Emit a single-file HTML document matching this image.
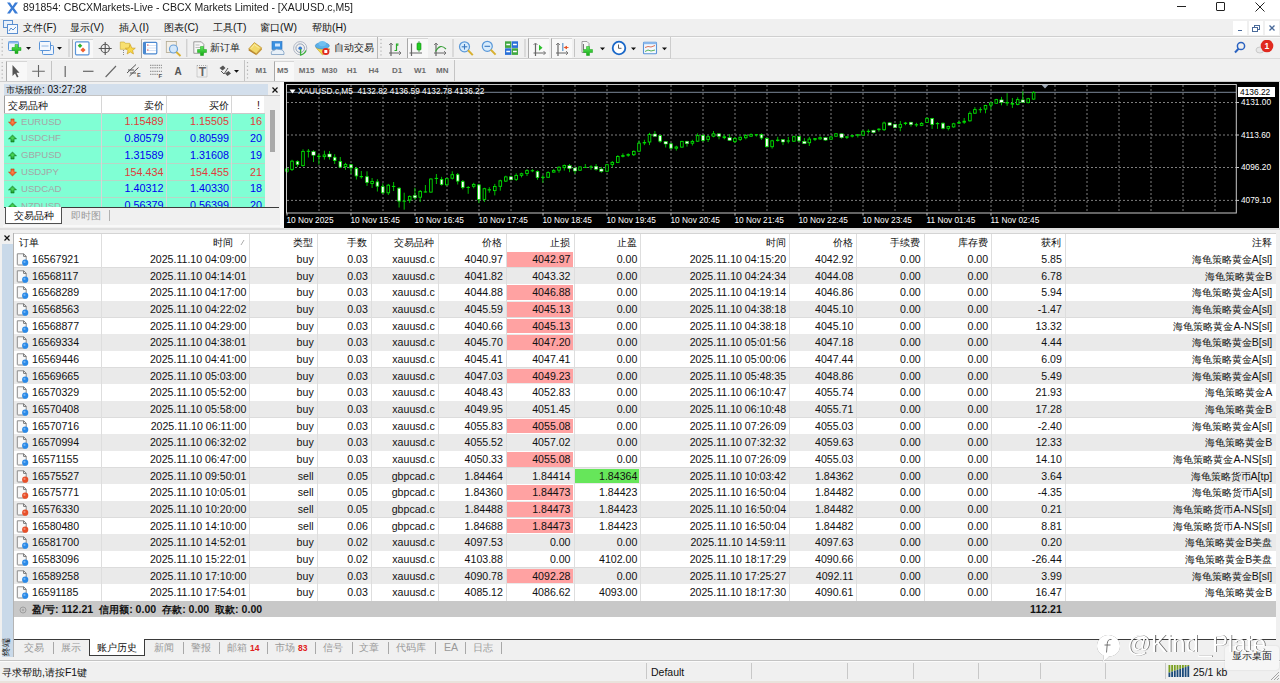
<!DOCTYPE html><html><head><meta charset="utf-8"><style>
*{box-sizing:border-box}
html,body{margin:0;padding:0}
body{width:1280px;height:683px;overflow:hidden;position:relative;background:#f0f0f0;font-family:"Liberation Sans",sans-serif;color:#000}
.a{position:absolute}
.t{position:absolute;white-space:nowrap;line-height:1}
.r{text-align:right}
</style></head><body><div class="a" style="left:0;top:0;width:1280px;height:18.5px;background:#fff"></div><svg class="a" style="left:6px;top:2px" width="13" height="12" viewBox="0 0 13 12"><path d="M1 0.5 L4 0.5 L6.5 4.2 L9 0.5 L12 0.5 L8 6 L12 11.5 L9 11.5 L6.5 7.8 L4 11.5 L1 11.5 L5 6 Z" fill="#3a7cd6"/></svg><div class="t" style="left:23px;top:0.6px;font-size:11.6px;color:#1a1a1a;transform:scaleX(0.905);transform-origin:0 0">891854: CBCXMarkets-Live - CBCX Markets Limited - [XAUUSD.c,M5]</div><div class="a" style="left:1177px;top:6px;width:9px;height:1px;background:#222"></div><div class="a" style="left:1216px;top:2px;width:9px;height:9px;border:1px solid #222;border-radius:1px"></div><svg class="a" style="left:1255px;top:2px" width="10" height="10" viewBox="0 0 10 10"><path d="M0.5 0.5 L9.5 9.5 M9.5 0.5 L0.5 9.5" stroke="#222" stroke-width="1"/></svg><div class="a" style="left:0;top:18.5px;width:1280px;height:17px;background:#f0f0f0"></div><div class="a" style="left:0;top:35.5px;width:1280px;height:1px;background:#d9d9d9"></div><svg class="a" style="left:3px;top:20px" width="15" height="14" viewBox="0 0 15 14"><rect x="0.5" y="0.5" width="9" height="7" fill="#e8f0fa" stroke="#5b8fd0"/><rect x="4.5" y="4.5" width="10" height="9" fill="#f4f8fd" stroke="#5b8fd0"/><path d="M6 11 L8 8 L10 10 L13 7" stroke="#5b8fd0" fill="none"/></svg><div class="t" style="left:23px;top:21.5px;font-size:10.5px;color:#111"><span style="font-size:0.94em">文件</span>(F)</div><div class="t" style="left:70px;top:21.5px;font-size:10.5px;color:#111"><span style="font-size:0.94em">显示</span>(V)</div><div class="t" style="left:119px;top:21.5px;font-size:10.5px;color:#111"><span style="font-size:0.94em">插入</span>(I)</div><div class="t" style="left:164px;top:21.5px;font-size:10.5px;color:#111"><span style="font-size:0.94em">图表</span>(C)</div><div class="t" style="left:213px;top:21.5px;font-size:10.5px;color:#111"><span style="font-size:0.94em">工具</span>(T)</div><div class="t" style="left:260px;top:21.5px;font-size:10.5px;color:#111"><span style="font-size:0.94em">窗口</span>(W)</div><div class="t" style="left:312px;top:21.5px;font-size:10.5px;color:#111"><span style="font-size:0.94em">帮助</span>(H)</div><div class="a" style="left:1233px;top:21px;width:13.5px;height:14px;background:#fff"></div><div class="a" style="left:1249px;top:21px;width:13.5px;height:14px;background:#fff"></div><div class="a" style="left:1265px;top:21px;width:13.5px;height:14px;background:#fff"></div><div class="a" style="left:1238px;top:29.5px;width:4px;height:1.5px;background:#4a6a9a"></div><svg class="a" style="left:1252px;top:25px" width="8" height="7" viewBox="0 0 8 7"><rect x="2.5" y="0.5" width="5" height="4" fill="none" stroke="#4a6a9a"/><rect x="0.5" y="2.5" width="5" height="4" fill="#fff" stroke="#4a6a9a"/></svg><svg class="a" style="left:1269px;top:25px" width="6" height="6" viewBox="0 0 6 6"><path d="M0.5 0.5 L5.5 5.5 M5.5 0.5 L0.5 5.5" stroke="#4a6a9a" stroke-width="1.3"/></svg><div class="a" style="left:0;top:58px;width:1280px;height:1px;background:#dadada"></div><div class="a" style="left:0;top:80.5px;width:1280px;height:1.5px;background:#dadada"></div><div class="a" style="left:0;top:36px;width:1280px;height:1px;background:#cfcfcf"></div><div class="a" style="left:0;top:37px;width:1280px;height:1px;background:#fafafa"></div><div class="a" style="left:0;top:58.2px;width:671px;height:1px;background:#cdcdcd"></div><div class="a" style="left:0;top:59.2px;width:671px;height:1px;background:#fafafa"></div><div class="a" style="left:670.3px;top:37px;width:1px;height:21.5px;background:#cdcdcd"></div><div class="a" style="left:0;top:80.8px;width:1280px;height:1px;background:#cdcdcd"></div><div class="a" style="left:377px;top:37px;width:1px;height:21.5px;background:#b8b8b8"></div><div class="a" style="left:72.3px;top:38.5px;width:21.200000000000003px;height:19.5px;background:#f8f8f8;border-left:1px solid #a8a8a8;border-top:1.3px solid #d6d6d6"></div><div class="a" style="left:140.5px;top:38.5px;width:20.5px;height:19.5px;background:#f8f8f8;border-left:1px solid #a8a8a8;border-top:1.3px solid #d6d6d6"></div><div class="a" style="left:406.5px;top:38.3px;width:21.5px;height:19.700000000000003px;background:#f8f8f8;border-left:1px solid #a8a8a8;border-top:1.3px solid #d6d6d6"></div><div class="a" style="left:528px;top:38.3px;width:21px;height:19.700000000000003px;background:#f8f8f8;border-left:1px solid #a8a8a8;border-top:1.3px solid #d6d6d6"></div><div class="a" style="left:551px;top:38.3px;width:21px;height:19.700000000000003px;background:#f8f8f8;border-left:1px solid #a8a8a8;border-top:1.3px solid #d6d6d6"></div><div class="a" style="left:5.5px;top:60.5px;width:21.0px;height:20.299999999999997px;background:#f8f8f8;border-left:1px solid #a8a8a8;border-top:1.3px solid #d6d6d6"></div><div class="a" style="left:273.5px;top:60.5px;width:20.5px;height:20.299999999999997px;background:#f8f8f8;border-left:1px solid #a8a8a8;border-top:1.3px solid #d6d6d6"></div><svg class="a" style="left:0;top:0" width="700" height="84" viewBox="0 0 700 84"><defs><linearGradient id="gp" x1="0" y1="0" x2="0" y2="1"><stop offset="0" stop-color="#5ee85e"/><stop offset="1" stop-color="#12a812"/></linearGradient></defs><line x1="2.2" y1="39" x2="2.2" y2="57" stroke="#b4b4b4" stroke-width="1.2" stroke-dasharray="1.3 2.5"/><line x1="2.2" y1="62" x2="2.2" y2="79" stroke="#b4b4b4" stroke-width="1.2" stroke-dasharray="1.3 2.5"/><line x1="381" y1="39" x2="381" y2="57" stroke="#b4b4b4" stroke-width="1.2" stroke-dasharray="1.3 2.5"/><line x1="247.5" y1="62" x2="247.5" y2="79" stroke="#b4b4b4" stroke-width="1.2" stroke-dasharray="1.3 2.5"/><line x1="69" y1="39" x2="69" y2="57" stroke="#c4c4c4" stroke-width="1"/><line x1="186.8" y1="39" x2="186.8" y2="57" stroke="#c4c4c4" stroke-width="1"/><line x1="453" y1="39" x2="453" y2="57" stroke="#c4c4c4" stroke-width="1"/><line x1="525" y1="39" x2="525" y2="57" stroke="#c4c4c4" stroke-width="1"/><line x1="574.5" y1="39" x2="574.5" y2="57" stroke="#c4c4c4" stroke-width="1"/><line x1="51.5" y1="61" x2="51.5" y2="80" stroke="#c4c4c4" stroke-width="1"/><line x1="244.5" y1="60" x2="244.5" y2="81" stroke="#c4c4c4" stroke-width="1"/><line x1="454.5" y1="60" x2="454.5" y2="81" stroke="#c4c4c4" stroke-width="1"/><path d="M26 47 L31 47 L28.5 49.8 Z" fill="#111"/><path d="M57 47 L62 47 L59.5 49.8 Z" fill="#111"/><path d="M234 70 L239 70 L236.5 72.8 Z" fill="#111"/><path d="M600 47.5 L605 47.5 L602.5 50.3 Z" fill="#111"/><path d="M631 47.5 L636 47.5 L633.5 50.3 Z" fill="#111"/><path d="M662 47.5 L667 47.5 L664.5 50.3 Z" fill="#111"/><rect x="8.5" y="41.5" width="10" height="9" rx="1" fill="#eef4fc" stroke="#5a94d8" stroke-width="1"/><rect x="8.5" y="41.5" width="10" height="2" fill="#8ab8ec"/><path d="M15 44.5 h3 v3 h3 v3 h-3 v3 h-3 v-3 h-3 v-3 h3 z" fill="url(#gp)" stroke="#18a018" stroke-width="0.5"/><rect x="42.5" y="45.5" width="11" height="9" rx="1" fill="#eef4fc" stroke="#5a94d8"/><rect x="39.5" y="41.5" width="11" height="9" rx="1" fill="#f4f8fd" stroke="#5a94d8"/><line x1="41.5" y1="46" x2="48.5" y2="46" stroke="#7aa6dc" stroke-width="0.8"/><rect x="75.5" y="41.8" width="13.5" height="13" rx="1" fill="#fff" stroke="#5a94d8" stroke-width="1.2"/><path d="M80 43.5 L82.3 45.8 L80 48 L77.7 45.8Z" fill="#2cb02c"/><path d="M83 47.5 L85.6 50 L83 52.5 L80.4 50Z" fill="#f06030"/><circle cx="105.2" cy="48.5" r="4.2" fill="none" stroke="#555" stroke-width="1.1"/><path d="M105.2 42 V55 M98.7 48.5 H111.7" stroke="#555" stroke-width="1.1"/><path d="M120.3 42 h4 l1 1.3 h4.5 v6 h-9.5 z" fill="#f8e070" stroke="#c8a830" stroke-width="0.6"/><path d="M130.3 44.5 L131.8 48 L135.3 48.2 L132.6 50.5 L133.5 54 L130.3 52 L127.1 54 L128 50.5 L125.3 48.2 L128.8 48 Z" fill="#f8d848" stroke="#c89820" stroke-width="0.6"/><line x1="123.5" y1="50" x2="123.5" y2="55" stroke="#444" stroke-width="0.6" stroke-dasharray="1 1"/><rect x="143.5" y="42.3" width="13.3" height="11.5" rx="1" fill="#fff" stroke="#4a88d0" stroke-width="1.2"/><rect x="143.5" y="42.3" width="2.5" height="11.5" fill="#4a88d0"/><path d="M147 45.5 H156 M147 48 H156 M147 50.5 H156" stroke="#b8d0f0" stroke-width="0.6"/><rect x="147" y="44.5" width="1.5" height="1" fill="#e05050"/><rect x="147" y="49.5" width="1.5" height="1" fill="#e05050"/><rect x="166.3" y="41.5" width="10" height="11" fill="#f4f0e8" stroke="#b0a890" stroke-width="0.8"/><circle cx="173.5" cy="49" r="4" fill="#d4e8fa" stroke="#6aa0d8" stroke-width="1.2"/><path d="M176.3 52 L180.5 56" stroke="#d8b030" stroke-width="1.8"/><path d="M193.8 41.8 h7.5 l2.5 2.5 v9 h-10 z" fill="#f6f6f6" stroke="#888" stroke-width="0.8"/><path d="M195.5 45 h4 M195.5 47.5 h6" stroke="#999" stroke-width="0.6"/><path d="M200.5 46.5 h3 v3 h3 v3 h-3 v3 h-3 v-3 h-3 v-3 h3 z" fill="url(#gp)" stroke="#18a018" stroke-width="0.5"/><path d="M248.8 48.8 L254.3 42.6 L261.6 47.8 L256.2 53.8 Z" fill="#f2d868" stroke="#b88a28" stroke-width="0.7"/><path d="M248.8 48.8 L256.2 53.8 L256.4 55.2 L248.6 50.4 Z" fill="#b88428"/><path d="M256.2 53.8 L261.6 47.8 L262 49.4 L256.4 55.2 Z" fill="#c89838"/><path d="M251 48.5 L254.5 44.6 L258.6 47.6" fill="none" stroke="#fff4b8" stroke-width="0.8"/><rect x="272" y="41.5" width="10" height="8" fill="#3a90e0" stroke="#2a70c0" stroke-width="0.6"/><rect x="275" y="43.5" width="5" height="3" fill="#cfe6ff"/><path d="M271.5 54.5 Q270.5 50.5 274 50.5 Q276 48 279.5 49.5 Q284.5 49.5 284 54.5 Z" fill="#e8f0f8" stroke="#7a9cc0" stroke-width="0.8"/><circle cx="300.2" cy="48.2" r="6.6" fill="none" stroke="#a8b0c0" stroke-width="0.9"/><circle cx="300.2" cy="48.2" r="4.3" fill="none" stroke="#8898b0" stroke-width="0.9"/><circle cx="300.2" cy="48.2" r="1.8" fill="#3a7ad0"/><path d="M300.6 49 V55 Q304 54.5 306 50.5" fill="none" stroke="#3ab03a" stroke-width="1.3"/><path d="M315.8 47.5 L322.5 55 L330 49 Z" fill="#f0d850" stroke="#c0a030" stroke-width="0.6"/><ellipse cx="322.3" cy="45.8" rx="7" ry="3.2" fill="#5ab0e8" stroke="#3a88c8" stroke-width="0.6"/><ellipse cx="322.3" cy="43.6" rx="3.8" ry="2.6" fill="#70c0f0"/><circle cx="325.8" cy="51.5" r="3.6" fill="#e02a20"/><rect x="324.3" y="50" width="3" height="3" fill="#fff"/><path d="M391 43.5 V56 M389 53 H401" stroke="#666" stroke-width="1.2"/><path d="M389 45 L391 43 L393 45 M399 51 L401 53 L399 55" fill="none" stroke="#666" stroke-width="0.8"/><path d="M436 43.5 V56 M434 53 H446" stroke="#666" stroke-width="1.2"/><path d="M434 45 L436 43 L438 45 M444 51 L446 53 L444 55" fill="none" stroke="#666" stroke-width="0.8"/><path d="M535.5 43.5 V56 M533.5 53 H545.5" stroke="#666" stroke-width="1.2"/><path d="M533.5 45 L535.5 43 L537.5 45 M543.5 51 L545.5 53 L543.5 55" fill="none" stroke="#666" stroke-width="0.8"/><path d="M558 43.5 V56 M556 53 H568" stroke="#666" stroke-width="1.2"/><path d="M556 45 L558 43 L560 45 M566 51 L568 53 L566 55" fill="none" stroke="#666" stroke-width="0.8"/><path d="M394.5 50.5 H396.5 V44 H398.5" fill="none" stroke="#2aaa2a" stroke-width="1.2"/><path d="M396.5 44 L399 45 L396.5 46.2Z" fill="#2aaa2a"/><path d="M411.5 43.5 V56 M409.5 53 H422" stroke="#666" stroke-width="1.2"/><line x1="419" y1="41" x2="419" y2="52" stroke="#3a9a3a" stroke-width="0.8"/><rect x="417" y="43" width="4" height="7" rx="0.8" fill="#22cc22" stroke="#118811" stroke-width="0.6"/><path d="M435.5 51.5 Q440 43 446 49" fill="none" stroke="#3aa03a" stroke-width="1.1"/><circle cx="464.5" cy="46.8" r="5" fill="#d8ecfc" stroke="#5a98d8" stroke-width="1.2"/><path d="M468.0 50.3 L472.8 55.099999999999994" stroke="#d8b030" stroke-width="2"/><path d="M461.7 46.8 H467.3" stroke="#3a78c0" stroke-width="1.1"/><path d="M464.5 44.0 V49.599999999999994" stroke="#3a78c0" stroke-width="1.1"/><circle cx="487.3" cy="46.3" r="5" fill="#d8ecfc" stroke="#5a98d8" stroke-width="1.2"/><path d="M490.8 49.8 L495.6 54.599999999999994" stroke="#d8b030" stroke-width="2"/><path d="M484.5 46.3 H490.1" stroke="#3a78c0" stroke-width="1.1"/><rect x="505" y="41.3" width="6.3" height="6.6" fill="#40a840"/><rect x="511.7" y="41.3" width="6.3" height="6.6" fill="#2a70d8"/><rect x="505" y="48.3" width="6.3" height="6.6" fill="#2a70d8"/><rect x="511.7" y="48.3" width="6.3" height="6.6" fill="#40a840"/><path d="M506.3 44.5 h3.8 M513 44.5 h3.8 M506.3 51.5 h3.8 M513 51.5 h3.8" stroke="#fff" stroke-width="1.6"/><path d="M539 44.8 L542.5 47.8 L539 50.8 Z" fill="#2ac02a"/><rect x="562" y="43" width="1.5" height="8" fill="#7aa8d0"/><path d="M563.5 47.5 L567 45.8 V49.2 Z" fill="#e85020"/><path d="M566 47.5 h2.5" stroke="#e85020" stroke-width="0.9"/><path d="M582 41.5 h5 l2 2 v9 h-7 z" fill="#f6f6f6" stroke="#888" stroke-width="0.8"/><path d="M583.5 44 v6" stroke="#555" stroke-width="0.8"/><path d="M586.5 46.5 h3 v3 h3 v3 h-3 v3 h-3 v-3 h-3 v-3 h3 z" fill="url(#gp)" stroke="#18a018" stroke-width="0.5"/><circle cx="619" cy="48" r="6.3" fill="#fff" stroke="#1a68c8" stroke-width="1.8"/><path d="M618.5 44.5 V48.3 H621.5" fill="none" stroke="#333" stroke-width="0.8"/><rect x="643.5" y="42.2" width="13" height="11.5" rx="0.8" fill="#f4f8fd" stroke="#5a94d8" stroke-width="1.1"/><rect x="643.5" y="42.2" width="13" height="2" fill="#8ab8ec"/><path d="M645 47.5 L648 46.5 L651 47 L655 45.5" fill="none" stroke="#d05030" stroke-width="0.8"/><path d="M645 51.5 L648 50 L651 51 L655 50" fill="none" stroke="#30a030" stroke-width="0.8"/><path d="M12.5 65 L12.5 76 L15 73.5 L17 77.5 L18.5 76.8 L16.5 72.8 L19.5 72.8 Z" fill="#555"/><path d="M38.5 65 V77 M32.2 71.2 H44.8" stroke="#666" stroke-width="1.1"/><path d="M65.2 66 V77" stroke="#666" stroke-width="1.2"/><path d="M83 71.3 H93.5" stroke="#666" stroke-width="1.2"/><path d="M105.6 77 L116 66" stroke="#666" stroke-width="1.1"/><path d="M127 73 L136 64.5 M129.5 76 L138.5 67.5 M128 70 h6 M130 73 h6" stroke="#555" stroke-width="1"/><path d="M150 65.3 h12 M150 67.8 h12 M150 71.3 h12 M150 74.3 h8" stroke="#777" stroke-width="0.9" stroke-dasharray="1.4 0.8"/><path d="M197 65.5 h10 v11.5 h-10 z" fill="none" stroke="#999" stroke-width="0.8" stroke-dasharray="1 1"/><path d="M219.5 68 L223 65.5 L225.5 68 L222.5 70.5 Z M225 73.5 L228.5 71 L231 73.5 L227.5 76 Z" fill="#555"/><path d="M221 71 L224 74 L228 68" fill="none" stroke="#555" stroke-width="1"/></svg><div class="t" style="left:137px;top:72.5px;font-size:5.5px;font-weight:bold;color:#555">E</div><div class="t" style="left:158.5px;top:73px;font-size:6px;font-weight:bold;color:#555">F</div><div class="t" style="left:174.5px;top:66.5px;font-size:10px;font-weight:bold;color:#555">A</div><div class="t" style="left:198.8px;top:66px;font-size:12px;font-weight:bold;color:#666">T</div><div class="t" style="left:210px;top:41.6px;font-size:10.5px;color:#222"><span style="font-size:0.95em">新订单</span></div><div class="t" style="left:334px;top:41.6px;font-size:10.5px;color:#222"><span style="font-size:0.95em">自动交易</span></div><div class="t" style="left:255.5px;top:67.2px;font-size:8px;font-weight:bold;color:#6c6c6c">M1</div><div class="t" style="left:277px;top:67.2px;font-size:8px;font-weight:bold;color:#6c6c6c">M5</div><div class="t" style="left:298.8px;top:67.2px;font-size:8px;font-weight:bold;color:#6c6c6c">M15</div><div class="t" style="left:321.8px;top:67.2px;font-size:8px;font-weight:bold;color:#6c6c6c">M30</div><div class="t" style="left:346.8px;top:67.2px;font-size:8px;font-weight:bold;color:#6c6c6c">H1</div><div class="t" style="left:368.5px;top:67.2px;font-size:8px;font-weight:bold;color:#6c6c6c">H4</div><div class="t" style="left:392px;top:67.2px;font-size:8px;font-weight:bold;color:#6c6c6c">D1</div><div class="t" style="left:414px;top:67.2px;font-size:8px;font-weight:bold;color:#6c6c6c">W1</div><div class="t" style="left:436px;top:67.2px;font-size:8px;font-weight:bold;color:#6c6c6c">MN</div><svg class="a" style="left:1230px;top:40px" width="50" height="16" viewBox="0 0 50 16"><circle cx="11" cy="6" r="3.6" fill="none" stroke="#2a62c0" stroke-width="1.5"/><path d="M8.5 8.8 L5 12.5" stroke="#2a62c0" stroke-width="2"/><ellipse cx="30" cy="10" rx="4" ry="3" fill="#e8e8e8" stroke="#bbb" stroke-width="0.7"/><circle cx="37" cy="6" r="6.3" fill="#e02a20"/></svg><div class="t" style="left:1264.6px;top:41.8px;font-size:8.6px;font-weight:bold;color:#fff">1</div><div class="a" style="left:3.5px;top:84px;width:264px;height:11px;background:#d3dfec"></div><div class="t" style="left:6px;top:84.5px;font-size:10px;color:#111"><span style="font-size:0.94em">市场报价</span>: 03:27:28</div><svg class="a" style="left:272px;top:86.5px" width="6" height="6" viewBox="0 0 6 6"><path d="M0.5 0.5 L5.5 5.5 M5.5 0.5 L0.5 5.5" stroke="#111" stroke-width="1.2"/></svg><div class="a" style="left:3.5px;top:95px;width:276.5px;height:1px;background:#c4c4c4"></div><div class="a" style="left:4px;top:96px;width:260px;height:17.3px;background:#fff"></div><div class="a" style="left:3.5px;top:96px;width:0.8px;height:111px;background:#a0a0a0"></div><div class="a" style="left:4px;top:113.3px;width:261.3px;height:94px;background:#80ffd4;overflow:hidden"><svg class="a" style="left:3.6px;top:4.30px" width="9" height="9" viewBox="0 0 10 10"><defs><radialGradient id="ag0" cx="0.5" cy="0.45" r="0.6"><stop offset="0" stop-color="#ff8a50"/><stop offset="1" stop-color="#e04010"/></radialGradient></defs><path d="M3.2 1 L6.8 1 L6.8 4.5 L9.5 4.5 L5 9 L0.5 4.5 L3.2 4.5 Z" fill="url(#ag0)" stroke="#c03010" stroke-width="0.5"/></svg><div class="t" style="left:17px;top:3.30px;font-size:9.6px;color:#a6a6a6">EURUSD</div><div class="t r" style="right:101.80px;top:3.00px;font-size:10.8px;color:#e03c3c">1.15489</div><div class="t r" style="right:36.30px;top:3.00px;font-size:10.8px;color:#e03c3c">1.15505</div><div class="t r" style="right:3.30px;top:3.00px;font-size:10.8px;color:#e03c3c">16</div><div class="a" style="left:0;top:16.30px;width:100%;height:1px;background:#b9d6c6"></div><svg class="a" style="left:3.6px;top:21.10px" width="9" height="9" viewBox="0 0 10 10"><defs><radialGradient id="ag1" cx="0.5" cy="0.45" r="0.6"><stop offset="0" stop-color="#50e060"/><stop offset="1" stop-color="#108820"/></radialGradient></defs><path d="M5 1 L9.5 5.5 L6.8 5.5 L6.8 9 L3.2 9 L3.2 5.5 L0.5 5.5 Z" fill="url(#ag1)" stroke="#0a6a1a" stroke-width="0.5"/></svg><div class="t" style="left:17px;top:20.10px;font-size:9.6px;color:#a6a6a6">USDCHF</div><div class="t r" style="right:101.80px;top:19.80px;font-size:10.8px;color:#0000f0">0.80579</div><div class="t r" style="right:36.30px;top:19.80px;font-size:10.8px;color:#0000f0">0.80599</div><div class="t r" style="right:3.30px;top:19.80px;font-size:10.8px;color:#0000f0">20</div><div class="a" style="left:0;top:33.10px;width:100%;height:1px;background:#b9d6c6"></div><svg class="a" style="left:3.6px;top:37.90px" width="9" height="9" viewBox="0 0 10 10"><defs><radialGradient id="ag2" cx="0.5" cy="0.45" r="0.6"><stop offset="0" stop-color="#50e060"/><stop offset="1" stop-color="#108820"/></radialGradient></defs><path d="M5 1 L9.5 5.5 L6.8 5.5 L6.8 9 L3.2 9 L3.2 5.5 L0.5 5.5 Z" fill="url(#ag2)" stroke="#0a6a1a" stroke-width="0.5"/></svg><div class="t" style="left:17px;top:36.90px;font-size:9.6px;color:#a6a6a6">GBPUSD</div><div class="t r" style="right:101.80px;top:36.60px;font-size:10.8px;color:#0000f0">1.31589</div><div class="t r" style="right:36.30px;top:36.60px;font-size:10.8px;color:#0000f0">1.31608</div><div class="t r" style="right:3.30px;top:36.60px;font-size:10.8px;color:#0000f0">19</div><div class="a" style="left:0;top:49.90px;width:100%;height:1px;background:#b9d6c6"></div><svg class="a" style="left:3.6px;top:54.70px" width="9" height="9" viewBox="0 0 10 10"><defs><radialGradient id="ag3" cx="0.5" cy="0.45" r="0.6"><stop offset="0" stop-color="#ff8a50"/><stop offset="1" stop-color="#e04010"/></radialGradient></defs><path d="M3.2 1 L6.8 1 L6.8 4.5 L9.5 4.5 L5 9 L0.5 4.5 L3.2 4.5 Z" fill="url(#ag3)" stroke="#c03010" stroke-width="0.5"/></svg><div class="t" style="left:17px;top:53.70px;font-size:9.6px;color:#a6a6a6">USDJPY</div><div class="t r" style="right:101.80px;top:53.40px;font-size:10.8px;color:#e03c3c">154.434</div><div class="t r" style="right:36.30px;top:53.40px;font-size:10.8px;color:#e03c3c">154.455</div><div class="t r" style="right:3.30px;top:53.40px;font-size:10.8px;color:#e03c3c">21</div><div class="a" style="left:0;top:66.70px;width:100%;height:1px;background:#b9d6c6"></div><svg class="a" style="left:3.6px;top:71.50px" width="9" height="9" viewBox="0 0 10 10"><defs><radialGradient id="ag4" cx="0.5" cy="0.45" r="0.6"><stop offset="0" stop-color="#50e060"/><stop offset="1" stop-color="#108820"/></radialGradient></defs><path d="M5 1 L9.5 5.5 L6.8 5.5 L6.8 9 L3.2 9 L3.2 5.5 L0.5 5.5 Z" fill="url(#ag4)" stroke="#0a6a1a" stroke-width="0.5"/></svg><div class="t" style="left:17px;top:70.50px;font-size:9.6px;color:#a6a6a6">USDCAD</div><div class="t r" style="right:101.80px;top:70.20px;font-size:10.8px;color:#0000f0">1.40312</div><div class="t r" style="right:36.30px;top:70.20px;font-size:10.8px;color:#0000f0">1.40330</div><div class="t r" style="right:3.30px;top:70.20px;font-size:10.8px;color:#0000f0">18</div><div class="a" style="left:0;top:83.50px;width:100%;height:1px;background:#b9d6c6"></div><svg class="a" style="left:3.6px;top:88.30px" width="9" height="9" viewBox="0 0 10 10"><defs><radialGradient id="ag5" cx="0.5" cy="0.45" r="0.6"><stop offset="0" stop-color="#50e060"/><stop offset="1" stop-color="#108820"/></radialGradient></defs><path d="M5 1 L9.5 5.5 L6.8 5.5 L6.8 9 L3.2 9 L3.2 5.5 L0.5 5.5 Z" fill="url(#ag5)" stroke="#0a6a1a" stroke-width="0.5"/></svg><div class="t" style="left:17px;top:87.30px;font-size:9.6px;color:#a6a6a6">NZDUSD</div><div class="t r" style="right:101.80px;top:87.00px;font-size:10.8px;color:#0000f0">0.56379</div><div class="t r" style="right:36.30px;top:87.00px;font-size:10.8px;color:#0000f0">0.56399</div><div class="t r" style="right:3.30px;top:87.00px;font-size:10.8px;color:#0000f0">20</div></div><div class="a" style="left:4px;top:112.8px;width:261.3px;height:1px;background:#c9c9c9"></div><div class="a" style="left:100.75px;top:96px;width:1px;height:111px;background:#d6d6d6"></div><div class="a" style="left:166.0px;top:96px;width:1px;height:111px;background:#d6d6d6"></div><div class="a" style="left:231.4px;top:96px;width:1px;height:111px;background:#d6d6d6"></div><div class="t" style="left:8px;top:99.5px;font-size:10.5px;color:#111"><span style="font-size:0.94em">交易品种</span></div><div class="t r" style="right:1116.5px;top:99.5px;font-size:10.5px;color:#111"><span style="font-size:0.94em">卖价</span></div><div class="t r" style="right:1051px;top:99.5px;font-size:10.5px;color:#111"><span style="font-size:0.94em">买价</span></div><div class="t r" style="right:1020px;top:99.5px;font-size:10.5px;color:#3a0a0a">!</div><div class="a" style="left:270.3px;top:109.5px;width:4.8px;height:42.3px;background:#a8a8a8"></div><div class="a" style="left:3.5px;top:207px;width:275.5px;height:1px;background:#3c3c3c"></div><div class="a" style="left:5px;top:207px;width:56.5px;height:16.8px;background:#fff;border:1px solid #505050;border-top:none"></div><div class="t" style="left:14px;top:209.8px;font-size:10.5px;color:#111"><span style="font-size:0.94em">交易品种</span></div><div class="t" style="left:71px;top:209.8px;font-size:10.5px;color:#999"><span style="font-size:0.94em">即时图</span></div><div class="a" style="left:108.5px;top:210px;width:1px;height:11px;background:#b0b0b0"></div><div class="a" style="left:0;top:227.6px;width:1280px;height:2px;background:#dedede"></div><div class="a" style="left:280.4px;top:82px;width:3.2px;height:145.5px;background:#fafafa"></div><div class="a" style="left:3px;top:224.8px;width:277.5px;height:2.6px;background:#f8f8f8"></div><div class="a" style="left:284.4px;top:82.3px;width:994.6px;height:146.2px;background:#000"></div><svg class="a" style="left:0;top:0" width="1280" height="683" viewBox="0 0 1280 683"><line x1="319.0" y1="85" x2="319.0" y2="213" stroke="#8c8c8c" stroke-width="0.9" stroke-dasharray="2 2"/><line x1="351.0" y1="85" x2="351.0" y2="213" stroke="#8c8c8c" stroke-width="0.9" stroke-dasharray="2 2"/><line x1="383.0" y1="85" x2="383.0" y2="213" stroke="#8c8c8c" stroke-width="0.9" stroke-dasharray="2 2"/><line x1="415.0" y1="85" x2="415.0" y2="213" stroke="#8c8c8c" stroke-width="0.9" stroke-dasharray="2 2"/><line x1="447.0" y1="85" x2="447.0" y2="213" stroke="#8c8c8c" stroke-width="0.9" stroke-dasharray="2 2"/><line x1="479.0" y1="85" x2="479.0" y2="213" stroke="#8c8c8c" stroke-width="0.9" stroke-dasharray="2 2"/><line x1="511.0" y1="85" x2="511.0" y2="213" stroke="#8c8c8c" stroke-width="0.9" stroke-dasharray="2 2"/><line x1="543.0" y1="85" x2="543.0" y2="213" stroke="#8c8c8c" stroke-width="0.9" stroke-dasharray="2 2"/><line x1="575.0" y1="85" x2="575.0" y2="213" stroke="#8c8c8c" stroke-width="0.9" stroke-dasharray="2 2"/><line x1="607.0" y1="85" x2="607.0" y2="213" stroke="#8c8c8c" stroke-width="0.9" stroke-dasharray="2 2"/><line x1="639.0" y1="85" x2="639.0" y2="213" stroke="#8c8c8c" stroke-width="0.9" stroke-dasharray="2 2"/><line x1="671.0" y1="85" x2="671.0" y2="213" stroke="#8c8c8c" stroke-width="0.9" stroke-dasharray="2 2"/><line x1="703.0" y1="85" x2="703.0" y2="213" stroke="#8c8c8c" stroke-width="0.9" stroke-dasharray="2 2"/><line x1="735.0" y1="85" x2="735.0" y2="213" stroke="#8c8c8c" stroke-width="0.9" stroke-dasharray="2 2"/><line x1="767.0" y1="85" x2="767.0" y2="213" stroke="#8c8c8c" stroke-width="0.9" stroke-dasharray="2 2"/><line x1="799.0" y1="85" x2="799.0" y2="213" stroke="#8c8c8c" stroke-width="0.9" stroke-dasharray="2 2"/><line x1="831.0" y1="85" x2="831.0" y2="213" stroke="#8c8c8c" stroke-width="0.9" stroke-dasharray="2 2"/><line x1="863.0" y1="85" x2="863.0" y2="213" stroke="#8c8c8c" stroke-width="0.9" stroke-dasharray="2 2"/><line x1="895.0" y1="85" x2="895.0" y2="213" stroke="#8c8c8c" stroke-width="0.9" stroke-dasharray="2 2"/><line x1="927.0" y1="85" x2="927.0" y2="213" stroke="#8c8c8c" stroke-width="0.9" stroke-dasharray="2 2"/><line x1="959.0" y1="85" x2="959.0" y2="213" stroke="#8c8c8c" stroke-width="0.9" stroke-dasharray="2 2"/><line x1="991.0" y1="85" x2="991.0" y2="213" stroke="#8c8c8c" stroke-width="0.9" stroke-dasharray="2 2"/><line x1="1023.0" y1="85" x2="1023.0" y2="213" stroke="#8c8c8c" stroke-width="0.9" stroke-dasharray="2 2"/><line x1="1055.0" y1="85" x2="1055.0" y2="213" stroke="#8c8c8c" stroke-width="0.9" stroke-dasharray="2 2"/><line x1="1087.0" y1="85" x2="1087.0" y2="213" stroke="#8c8c8c" stroke-width="0.9" stroke-dasharray="2 2"/><line x1="1119.0" y1="85" x2="1119.0" y2="213" stroke="#8c8c8c" stroke-width="0.9" stroke-dasharray="2 2"/><line x1="1151.0" y1="85" x2="1151.0" y2="213" stroke="#8c8c8c" stroke-width="0.9" stroke-dasharray="2 2"/><line x1="1183.0" y1="85" x2="1183.0" y2="213" stroke="#8c8c8c" stroke-width="0.9" stroke-dasharray="2 2"/><line x1="1215.0" y1="85" x2="1215.0" y2="213" stroke="#8c8c8c" stroke-width="0.9" stroke-dasharray="2 2"/><line x1="287" y1="102.5" x2="1236" y2="102.5" stroke="#8c8c8c" stroke-width="0.9" stroke-dasharray="2 2"/><line x1="287" y1="135.0" x2="1236" y2="135.0" stroke="#8c8c8c" stroke-width="0.9" stroke-dasharray="2 2"/><line x1="287" y1="167.5" x2="1236" y2="167.5" stroke="#8c8c8c" stroke-width="0.9" stroke-dasharray="2 2"/><line x1="287" y1="200.4" x2="1236" y2="200.4" stroke="#8c8c8c" stroke-width="0.9" stroke-dasharray="2 2"/><line x1="287" y1="92.3" x2="1236.3" y2="92.3" stroke="#7b8898" stroke-width="1"/><line x1="286.9" y1="167.5" x2="286.9" y2="173.0" stroke="#00d000" stroke-width="0.9"/><rect x="285.60" y="169.00" width="2.5999999999999996" height="2.20" fill="#000" stroke="#00e000" stroke-width="0.9"/><line x1="292.0" y1="159.8" x2="292.0" y2="171.0" stroke="#00d000" stroke-width="0.9"/><rect x="290.70" y="161.20" width="2.5999999999999996" height="8.20" fill="#000" stroke="#00e000" stroke-width="0.9"/><line x1="297.5" y1="160.4" x2="297.5" y2="166.9" stroke="#00d000" stroke-width="0.9"/><rect x="296.20" y="161.40" width="2.5999999999999996" height="3.20" fill="#fff" stroke="#00e000" stroke-width="0.8"/><line x1="303.0" y1="149.3" x2="303.0" y2="166.6" stroke="#00d000" stroke-width="0.9"/><rect x="301.70" y="151.40" width="2.5999999999999996" height="14.20" fill="#000" stroke="#00e000" stroke-width="0.9"/><line x1="308.4" y1="149.0" x2="308.4" y2="157.5" stroke="#00d000" stroke-width="0.9"/><rect x="306.70" y="150.70" width="3.4" height="1.20" fill="#00d800"/><line x1="313.5" y1="150.2" x2="313.5" y2="162.0" stroke="#00d000" stroke-width="0.9"/><rect x="311.80" y="151.60" width="3.4" height="3.60" fill="#fff" stroke="#00d800" stroke-width="0.55"/><line x1="318.9" y1="154.0" x2="318.9" y2="164.5" stroke="#00d000" stroke-width="0.9"/><rect x="317.20" y="155.70" width="3.4" height="1.30" fill="#00d800"/><line x1="324.4" y1="150.7" x2="324.4" y2="159.6" stroke="#00d000" stroke-width="0.9"/><rect x="323.10" y="155.00" width="2.5999999999999996" height="1.60" fill="#000" stroke="#00e000" stroke-width="0.9"/><line x1="329.5" y1="151.0" x2="329.5" y2="159.6" stroke="#00d000" stroke-width="0.9"/><rect x="327.80" y="154.00" width="3.4" height="3.00" fill="#fff" stroke="#00d800" stroke-width="0.55"/><line x1="334.7" y1="154.2" x2="334.7" y2="164.0" stroke="#00d000" stroke-width="0.9"/><rect x="333.40" y="157.30" width="2.5999999999999996" height="3.30" fill="#fff" stroke="#00e000" stroke-width="0.8"/><line x1="340.3" y1="157.0" x2="340.3" y2="167.8" stroke="#00d000" stroke-width="0.9"/><rect x="339.00" y="161.40" width="2.5999999999999996" height="5.70" fill="#fff" stroke="#00e000" stroke-width="0.8"/><line x1="345.5" y1="162.8" x2="345.5" y2="169.8" stroke="#00d000" stroke-width="0.9"/><rect x="344.20" y="164.40" width="2.5999999999999996" height="2.10" fill="#000" stroke="#00e000" stroke-width="0.9"/><line x1="351.0" y1="164.0" x2="351.0" y2="174.0" stroke="#00d000" stroke-width="0.9"/><rect x="349.70" y="164.70" width="2.5999999999999996" height="3.20" fill="#fff" stroke="#00e000" stroke-width="0.8"/><line x1="356.4" y1="166.9" x2="356.4" y2="179.5" stroke="#00d000" stroke-width="0.9"/><rect x="355.10" y="168.40" width="2.5999999999999996" height="7.50" fill="#fff" stroke="#00e000" stroke-width="0.8"/><line x1="361.3" y1="171.0" x2="361.3" y2="178.6" stroke="#00d000" stroke-width="0.9"/><rect x="359.60" y="176.00" width="3.4" height="1.20" fill="#00d800"/><line x1="367.0" y1="171.3" x2="367.0" y2="185.9" stroke="#00d000" stroke-width="0.9"/><rect x="365.70" y="176.70" width="2.5999999999999996" height="5.90" fill="#fff" stroke="#00e000" stroke-width="0.8"/><line x1="372.1" y1="178.0" x2="372.1" y2="188.0" stroke="#00d000" stroke-width="0.9"/><rect x="370.80" y="181.40" width="2.5999999999999996" height="2.10" fill="#000" stroke="#00e000" stroke-width="0.9"/><line x1="377.4" y1="179.2" x2="377.4" y2="191.5" stroke="#00d000" stroke-width="0.9"/><rect x="376.10" y="181.90" width="2.5999999999999996" height="4.30" fill="#fff" stroke="#00e000" stroke-width="0.8"/><line x1="382.8" y1="183.3" x2="382.8" y2="193.8" stroke="#00d000" stroke-width="0.9"/><rect x="381.50" y="186.60" width="2.5999999999999996" height="6.20" fill="#fff" stroke="#00e000" stroke-width="0.8"/><line x1="388.3" y1="183.9" x2="388.3" y2="195.0" stroke="#00d000" stroke-width="0.9"/><rect x="387.00" y="185.20" width="2.5999999999999996" height="7.60" fill="#000" stroke="#00e000" stroke-width="0.9"/><line x1="393.6" y1="182.0" x2="393.6" y2="191.0" stroke="#00d000" stroke-width="0.9"/><rect x="391.90" y="185.90" width="3.4" height="1.10" fill="#00d800"/><line x1="399.1" y1="187.2" x2="399.1" y2="207.5" stroke="#00d000" stroke-width="0.9"/><rect x="397.80" y="188.20" width="2.5999999999999996" height="12.90" fill="#fff" stroke="#00e000" stroke-width="0.8"/><line x1="404.2" y1="192.7" x2="404.2" y2="209.7" stroke="#00d000" stroke-width="0.9"/><rect x="402.50" y="200.70" width="3.4" height="1.00" fill="#00d800"/><line x1="409.7" y1="195.4" x2="409.7" y2="203.0" stroke="#00d000" stroke-width="0.9"/><rect x="408.40" y="196.40" width="2.5999999999999996" height="3.60" fill="#000" stroke="#00e000" stroke-width="0.9"/><line x1="414.9" y1="187.8" x2="414.9" y2="199.8" stroke="#00d000" stroke-width="0.9"/><rect x="413.20" y="195.40" width="3.4" height="2.40" fill="#fff" stroke="#00d800" stroke-width="0.55"/><line x1="420.2" y1="190.0" x2="420.2" y2="202.0" stroke="#00d000" stroke-width="0.9"/><rect x="418.90" y="191.40" width="2.5999999999999996" height="5.80" fill="#000" stroke="#00e000" stroke-width="0.9"/><line x1="425.4" y1="185.0" x2="425.4" y2="192.5" stroke="#00d000" stroke-width="0.9"/><rect x="423.70" y="191.40" width="3.4" height="1.10" fill="#00d800"/><line x1="430.9" y1="178.4" x2="430.9" y2="192.7" stroke="#00d000" stroke-width="0.9"/><rect x="429.60" y="179.00" width="2.5999999999999996" height="13.10" fill="#000" stroke="#00e000" stroke-width="0.9"/><line x1="436.4" y1="174.0" x2="436.4" y2="184.0" stroke="#00d000" stroke-width="0.9"/><rect x="434.70" y="177.90" width="3.4" height="1.10" fill="#00d800"/><line x1="441.6" y1="176.8" x2="441.6" y2="185.6" stroke="#00d000" stroke-width="0.9"/><rect x="440.30" y="179.40" width="2.5999999999999996" height="5.20" fill="#fff" stroke="#00e000" stroke-width="0.8"/><line x1="446.8" y1="177.9" x2="446.8" y2="185.6" stroke="#00d000" stroke-width="0.9"/><rect x="445.50" y="178.60" width="2.5999999999999996" height="6.20" fill="#000" stroke="#00e000" stroke-width="0.9"/><line x1="452.3" y1="171.3" x2="452.3" y2="179.5" stroke="#00d000" stroke-width="0.9"/><rect x="451.00" y="174.70" width="2.5999999999999996" height="3.50" fill="#000" stroke="#00e000" stroke-width="0.9"/><line x1="457.7" y1="173.0" x2="457.7" y2="184.5" stroke="#00d000" stroke-width="0.9"/><rect x="456.40" y="174.70" width="2.5999999999999996" height="6.40" fill="#fff" stroke="#00e000" stroke-width="0.8"/><line x1="462.8" y1="180.0" x2="462.8" y2="189.4" stroke="#00d000" stroke-width="0.9"/><rect x="461.50" y="181.60" width="2.5999999999999996" height="5.80" fill="#fff" stroke="#00e000" stroke-width="0.8"/><line x1="468.2" y1="186.0" x2="468.2" y2="193.8" stroke="#00d000" stroke-width="0.9"/><rect x="466.50" y="187.00" width="3.4" height="1.00" fill="#00d800"/><line x1="473.7" y1="182.8" x2="473.7" y2="188.3" stroke="#00d000" stroke-width="0.9"/><rect x="472.40" y="184.40" width="2.5999999999999996" height="1.90" fill="#000" stroke="#00e000" stroke-width="0.9"/><line x1="478.9" y1="183.9" x2="478.9" y2="203.1" stroke="#00d000" stroke-width="0.9"/><rect x="477.60" y="184.90" width="2.5999999999999996" height="14.50" fill="#fff" stroke="#00e000" stroke-width="0.8"/><line x1="484.4" y1="187.8" x2="484.4" y2="202.0" stroke="#00d000" stroke-width="0.9"/><rect x="483.10" y="188.70" width="2.5999999999999996" height="10.70" fill="#000" stroke="#00e000" stroke-width="0.9"/><line x1="489.3" y1="187.2" x2="489.3" y2="192.7" stroke="#00d000" stroke-width="0.9"/><rect x="487.60" y="189.20" width="3.4" height="1.30" fill="#00d800"/><line x1="494.8" y1="183.9" x2="494.8" y2="195.4" stroke="#00d000" stroke-width="0.9"/><rect x="493.50" y="186.50" width="2.5999999999999996" height="4.10" fill="#000" stroke="#00e000" stroke-width="0.9"/><line x1="500.3" y1="179.7" x2="500.3" y2="190.7" stroke="#00d000" stroke-width="0.9"/><rect x="499.00" y="180.80" width="2.5999999999999996" height="5.50" fill="#000" stroke="#00e000" stroke-width="0.9"/><line x1="505.8" y1="175.7" x2="505.8" y2="182.0" stroke="#00d000" stroke-width="0.9"/><rect x="504.50" y="176.90" width="2.5999999999999996" height="4.20" fill="#000" stroke="#00e000" stroke-width="0.9"/><line x1="511.0" y1="175.7" x2="511.0" y2="180.4" stroke="#00d000" stroke-width="0.9"/><rect x="509.30" y="176.80" width="3.4" height="3.00" fill="#fff" stroke="#00d800" stroke-width="0.55"/><line x1="516.2" y1="173.3" x2="516.2" y2="181.0" stroke="#00d000" stroke-width="0.9"/><rect x="514.90" y="175.40" width="2.5999999999999996" height="4.00" fill="#000" stroke="#00e000" stroke-width="0.9"/><line x1="521.5" y1="172.7" x2="521.5" y2="177.4" stroke="#00d000" stroke-width="0.9"/><rect x="520.20" y="173.70" width="2.5999999999999996" height="1.60" fill="#000" stroke="#00e000" stroke-width="0.9"/><line x1="527.0" y1="169.2" x2="527.0" y2="176.0" stroke="#00d000" stroke-width="0.9"/><rect x="525.70" y="170.60" width="2.5999999999999996" height="2.90" fill="#000" stroke="#00e000" stroke-width="0.9"/><line x1="532.4" y1="169.2" x2="532.4" y2="172.2" stroke="#00d000" stroke-width="0.9"/><rect x="530.70" y="170.20" width="3.4" height="1.10" fill="#00d800"/><line x1="537.5" y1="170.4" x2="537.5" y2="179.8" stroke="#00d000" stroke-width="0.9"/><rect x="536.20" y="171.40" width="2.5999999999999996" height="6.20" fill="#fff" stroke="#00e000" stroke-width="0.8"/><line x1="542.9" y1="175.0" x2="542.9" y2="182.7" stroke="#00d000" stroke-width="0.9"/><rect x="541.20" y="176.80" width="3.4" height="1.20" fill="#00d800"/><line x1="548.1" y1="171.3" x2="548.1" y2="178.0" stroke="#00d000" stroke-width="0.9"/><rect x="546.80" y="172.60" width="2.5999999999999996" height="4.70" fill="#000" stroke="#00e000" stroke-width="0.9"/><line x1="553.7" y1="169.2" x2="553.7" y2="172.7" stroke="#00d000" stroke-width="0.9"/><rect x="552.40" y="170.60" width="2.5999999999999996" height="1.50" fill="#000" stroke="#00e000" stroke-width="0.9"/><line x1="559.0" y1="166.3" x2="559.0" y2="172.7" stroke="#00d000" stroke-width="0.9"/><rect x="557.70" y="167.30" width="2.5999999999999996" height="2.90" fill="#000" stroke="#00e000" stroke-width="0.9"/><line x1="564.3" y1="164.5" x2="564.3" y2="170.6" stroke="#00d000" stroke-width="0.9"/><rect x="563.00" y="165.50" width="2.5999999999999996" height="2.10" fill="#000" stroke="#00e000" stroke-width="0.9"/><line x1="569.5" y1="164.0" x2="569.5" y2="172.2" stroke="#00d000" stroke-width="0.9"/><rect x="567.80" y="165.70" width="3.4" height="2.90" fill="#fff" stroke="#00d800" stroke-width="0.55"/><line x1="575.0" y1="167.5" x2="575.0" y2="173.9" stroke="#00d000" stroke-width="0.9"/><rect x="573.30" y="168.00" width="3.4" height="3.00" fill="#fff" stroke="#00d800" stroke-width="0.55"/><line x1="580.0" y1="166.3" x2="580.0" y2="171.0" stroke="#00d000" stroke-width="0.9"/><rect x="578.70" y="167.00" width="2.5999999999999996" height="3.20" fill="#000" stroke="#00e000" stroke-width="0.9"/><line x1="585.3" y1="164.0" x2="585.3" y2="168.0" stroke="#00d000" stroke-width="0.9"/><rect x="583.60" y="166.90" width="3.4" height="1.00" fill="#00d800"/><line x1="591.0" y1="165.1" x2="591.0" y2="169.8" stroke="#00d000" stroke-width="0.9"/><rect x="589.30" y="166.30" width="3.4" height="1.20" fill="#00d800"/><line x1="596.1" y1="164.0" x2="596.1" y2="170.6" stroke="#00d000" stroke-width="0.9"/><rect x="594.40" y="166.30" width="3.4" height="2.90" fill="#fff" stroke="#00d800" stroke-width="0.55"/><line x1="601.4" y1="166.9" x2="601.4" y2="172.7" stroke="#00d000" stroke-width="0.9"/><rect x="599.70" y="169.00" width="3.4" height="2.40" fill="#fff" stroke="#00d800" stroke-width="0.55"/><line x1="607.0" y1="163.9" x2="607.0" y2="172.2" stroke="#00d000" stroke-width="0.9"/><rect x="605.70" y="164.70" width="2.5999999999999996" height="6.50" fill="#000" stroke="#00e000" stroke-width="0.9"/><line x1="612.3" y1="161.0" x2="612.3" y2="167.5" stroke="#00d000" stroke-width="0.9"/><rect x="611.00" y="162.40" width="2.5999999999999996" height="2.00" fill="#000" stroke="#00e000" stroke-width="0.9"/><line x1="617.8" y1="155.2" x2="617.8" y2="163.1" stroke="#00d000" stroke-width="0.9"/><rect x="616.50" y="156.50" width="2.5999999999999996" height="5.90" fill="#000" stroke="#00e000" stroke-width="0.9"/><line x1="622.9" y1="153.3" x2="622.9" y2="157.4" stroke="#00d000" stroke-width="0.9"/><rect x="621.20" y="155.10" width="3.4" height="1.70" fill="#00d800"/><line x1="628.2" y1="153.3" x2="628.2" y2="156.8" stroke="#00d000" stroke-width="0.9"/><rect x="626.50" y="154.10" width="3.4" height="1.60" fill="#00d800"/><line x1="633.8" y1="150.4" x2="633.8" y2="156.0" stroke="#00d000" stroke-width="0.9"/><rect x="632.50" y="151.40" width="2.5999999999999996" height="3.30" fill="#000" stroke="#00e000" stroke-width="0.9"/><line x1="639.0" y1="140.4" x2="639.0" y2="152.2" stroke="#00d000" stroke-width="0.9"/><rect x="637.70" y="143.20" width="2.5999999999999996" height="8.00" fill="#000" stroke="#00e000" stroke-width="0.9"/><line x1="644.4" y1="139.8" x2="644.4" y2="145.1" stroke="#00d000" stroke-width="0.9"/><rect x="642.70" y="142.00" width="3.4" height="1.40" fill="#00d800"/><line x1="649.5" y1="132.8" x2="649.5" y2="145.1" stroke="#00d000" stroke-width="0.9"/><rect x="648.20" y="134.40" width="2.5999999999999996" height="7.60" fill="#000" stroke="#00e000" stroke-width="0.9"/><line x1="654.9" y1="131.0" x2="654.9" y2="136.3" stroke="#00d000" stroke-width="0.9"/><rect x="653.20" y="134.00" width="3.4" height="2.40" fill="#fff" stroke="#00d800" stroke-width="0.55"/><line x1="660.1" y1="134.9" x2="660.1" y2="142.8" stroke="#00d000" stroke-width="0.9"/><rect x="658.80" y="135.60" width="2.5999999999999996" height="5.60" fill="#fff" stroke="#00e000" stroke-width="0.8"/><line x1="665.7" y1="141.0" x2="665.7" y2="147.5" stroke="#00d000" stroke-width="0.9"/><rect x="664.00" y="141.60" width="3.4" height="2.40" fill="#fff" stroke="#00d800" stroke-width="0.55"/><line x1="671.0" y1="142.8" x2="671.0" y2="149.2" stroke="#00d000" stroke-width="0.9"/><rect x="669.70" y="143.80" width="2.5999999999999996" height="4.40" fill="#fff" stroke="#00e000" stroke-width="0.8"/><line x1="676.3" y1="145.7" x2="676.3" y2="150.6" stroke="#00d000" stroke-width="0.9"/><rect x="675.00" y="147.00" width="2.5999999999999996" height="1.20" fill="#000" stroke="#00e000" stroke-width="0.9"/><line x1="681.9" y1="140.8" x2="681.9" y2="147.8" stroke="#00d000" stroke-width="0.9"/><rect x="680.60" y="141.40" width="2.5999999999999996" height="5.70" fill="#000" stroke="#00e000" stroke-width="0.9"/><line x1="687.0" y1="140.8" x2="687.0" y2="146.6" stroke="#00d000" stroke-width="0.9"/><rect x="685.30" y="141.30" width="3.4" height="2.40" fill="#fff" stroke="#00d800" stroke-width="0.55"/><line x1="692.4" y1="139.8" x2="692.4" y2="145.5" stroke="#00d000" stroke-width="0.9"/><rect x="691.10" y="141.40" width="2.5999999999999996" height="1.80" fill="#000" stroke="#00e000" stroke-width="0.9"/><line x1="697.6" y1="133.4" x2="697.6" y2="142.0" stroke="#00d000" stroke-width="0.9"/><rect x="696.30" y="135.60" width="2.5999999999999996" height="5.60" fill="#000" stroke="#00e000" stroke-width="0.9"/><line x1="703.0" y1="134.6" x2="703.0" y2="141.6" stroke="#00d000" stroke-width="0.9"/><rect x="701.70" y="135.30" width="2.5999999999999996" height="5.30" fill="#fff" stroke="#00e000" stroke-width="0.8"/><line x1="708.1" y1="135.2" x2="708.1" y2="142.0" stroke="#00d000" stroke-width="0.9"/><rect x="706.80" y="136.70" width="2.5999999999999996" height="2.70" fill="#000" stroke="#00e000" stroke-width="0.9"/><line x1="713.5" y1="131.0" x2="713.5" y2="137.3" stroke="#00d000" stroke-width="0.9"/><rect x="712.20" y="133.80" width="2.5999999999999996" height="2.40" fill="#000" stroke="#00e000" stroke-width="0.9"/><line x1="719.0" y1="133.4" x2="719.0" y2="139.3" stroke="#00d000" stroke-width="0.9"/><rect x="717.30" y="133.80" width="3.4" height="2.50" fill="#fff" stroke="#00d800" stroke-width="0.55"/><line x1="724.3" y1="134.6" x2="724.3" y2="139.3" stroke="#00d000" stroke-width="0.9"/><rect x="722.60" y="136.30" width="3.4" height="1.80" fill="#00d800"/><line x1="729.6" y1="134.0" x2="729.6" y2="141.0" stroke="#00d000" stroke-width="0.9"/><rect x="727.90" y="137.70" width="3.4" height="2.70" fill="#fff" stroke="#00d800" stroke-width="0.55"/><line x1="734.9" y1="136.9" x2="734.9" y2="143.1" stroke="#00d000" stroke-width="0.9"/><rect x="733.60" y="138.50" width="2.5999999999999996" height="3.10" fill="#000" stroke="#00e000" stroke-width="0.9"/><line x1="740.2" y1="136.3" x2="740.2" y2="141.0" stroke="#00d000" stroke-width="0.9"/><rect x="738.90" y="137.30" width="2.5999999999999996" height="2.10" fill="#000" stroke="#00e000" stroke-width="0.9"/><line x1="745.8" y1="134.0" x2="745.8" y2="139.3" stroke="#00d000" stroke-width="0.9"/><rect x="744.50" y="135.60" width="2.5999999999999996" height="2.10" fill="#000" stroke="#00e000" stroke-width="0.9"/><line x1="751.0" y1="133.4" x2="751.0" y2="136.9" stroke="#00d000" stroke-width="0.9"/><rect x="749.70" y="134.60" width="2.5999999999999996" height="1.60" fill="#000" stroke="#00e000" stroke-width="0.9"/><line x1="756.4" y1="134.0" x2="756.4" y2="136.6" stroke="#00d000" stroke-width="0.9"/><rect x="754.70" y="134.20" width="3.4" height="1.20" fill="#00d800"/><line x1="761.5" y1="133.4" x2="761.5" y2="139.8" stroke="#00d000" stroke-width="0.9"/><rect x="760.20" y="134.60" width="2.5999999999999996" height="3.40" fill="#fff" stroke="#00e000" stroke-width="0.8"/><line x1="766.9" y1="137.5" x2="766.9" y2="147.5" stroke="#00d000" stroke-width="0.9"/><rect x="765.60" y="138.50" width="2.5999999999999996" height="8.20" fill="#fff" stroke="#00e000" stroke-width="0.8"/><line x1="772.1" y1="139.8" x2="772.1" y2="148.6" stroke="#00d000" stroke-width="0.9"/><rect x="770.80" y="140.80" width="2.5999999999999996" height="5.90" fill="#000" stroke="#00e000" stroke-width="0.9"/><line x1="777.7" y1="136.9" x2="777.7" y2="141.6" stroke="#00d000" stroke-width="0.9"/><rect x="776.00" y="139.60" width="3.4" height="1.40" fill="#00d800"/><line x1="783.0" y1="139.3" x2="783.0" y2="145.1" stroke="#00d000" stroke-width="0.9"/><rect x="781.30" y="139.60" width="3.4" height="2.40" fill="#fff" stroke="#00d800" stroke-width="0.55"/><line x1="788.3" y1="136.9" x2="788.3" y2="143.4" stroke="#00d000" stroke-width="0.9"/><rect x="786.60" y="140.40" width="3.4" height="1.20" fill="#00d800"/><line x1="793.9" y1="135.7" x2="793.9" y2="142.0" stroke="#00d000" stroke-width="0.9"/><rect x="792.60" y="136.70" width="2.5999999999999996" height="4.50" fill="#000" stroke="#00e000" stroke-width="0.9"/><line x1="799.0" y1="135.7" x2="799.0" y2="141.6" stroke="#00d000" stroke-width="0.9"/><rect x="797.70" y="136.50" width="2.5999999999999996" height="4.40" fill="#fff" stroke="#00e000" stroke-width="0.8"/><line x1="804.4" y1="138.1" x2="804.4" y2="143.9" stroke="#00d000" stroke-width="0.9"/><rect x="802.70" y="141.30" width="3.4" height="2.40" fill="#fff" stroke="#00d800" stroke-width="0.55"/><line x1="809.3" y1="136.9" x2="809.3" y2="146.0" stroke="#00d000" stroke-width="0.9"/><rect x="808.00" y="139.10" width="2.5999999999999996" height="3.60" fill="#000" stroke="#00e000" stroke-width="0.9"/><line x1="815.0" y1="138.1" x2="815.0" y2="141.0" stroke="#00d000" stroke-width="0.9"/><rect x="813.30" y="138.10" width="3.4" height="1.70" fill="#00d800"/><line x1="820.1" y1="136.3" x2="820.1" y2="139.8" stroke="#00d000" stroke-width="0.9"/><rect x="818.80" y="137.70" width="2.5999999999999996" height="1.20" fill="#000" stroke="#00e000" stroke-width="0.9"/><line x1="825.5" y1="137.3" x2="825.5" y2="140.8" stroke="#00d000" stroke-width="0.9"/><rect x="823.80" y="137.70" width="3.4" height="2.40" fill="#fff" stroke="#00d800" stroke-width="0.55"/><line x1="831.0" y1="135.7" x2="831.0" y2="139.8" stroke="#00d000" stroke-width="0.9"/><rect x="829.70" y="137.00" width="2.5999999999999996" height="2.20" fill="#000" stroke="#00e000" stroke-width="0.9"/><line x1="836.0" y1="133.0" x2="836.0" y2="136.9" stroke="#00d000" stroke-width="0.9"/><rect x="834.70" y="133.80" width="2.5999999999999996" height="2.40" fill="#000" stroke="#00e000" stroke-width="0.9"/><line x1="841.6" y1="133.4" x2="841.6" y2="138.7" stroke="#00d000" stroke-width="0.9"/><rect x="839.90" y="133.80" width="3.4" height="3.90" fill="#fff" stroke="#00d800" stroke-width="0.55"/><line x1="846.9" y1="136.3" x2="846.9" y2="139.0" stroke="#00d000" stroke-width="0.9"/><rect x="845.20" y="136.30" width="3.4" height="1.50" fill="#00d800"/><line x1="852.2" y1="135.1" x2="852.2" y2="137.5" stroke="#00d000" stroke-width="0.9"/><rect x="850.50" y="135.10" width="3.4" height="1.50" fill="#00d800"/><line x1="857.8" y1="134.0" x2="857.8" y2="137.5" stroke="#00d000" stroke-width="0.9"/><rect x="856.10" y="134.30" width="3.4" height="1.40" fill="#00d800"/><line x1="863.0" y1="130.4" x2="863.0" y2="135.9" stroke="#00d000" stroke-width="0.9"/><rect x="861.70" y="131.20" width="2.5999999999999996" height="3.90" fill="#000" stroke="#00e000" stroke-width="0.9"/><line x1="868.4" y1="129.3" x2="868.4" y2="133.6" stroke="#00d000" stroke-width="0.9"/><rect x="866.70" y="130.80" width="3.4" height="1.20" fill="#00d800"/><line x1="873.5" y1="129.8" x2="873.5" y2="133.4" stroke="#00d000" stroke-width="0.9"/><rect x="871.80" y="130.20" width="3.4" height="2.40" fill="#fff" stroke="#00d800" stroke-width="0.55"/><line x1="878.9" y1="128.1" x2="878.9" y2="131.6" stroke="#00d000" stroke-width="0.9"/><rect x="877.20" y="128.70" width="3.4" height="1.40" fill="#00d800"/><line x1="884.1" y1="121.6" x2="884.1" y2="131.0" stroke="#00d000" stroke-width="0.9"/><rect x="882.80" y="123.00" width="2.5999999999999996" height="6.70" fill="#000" stroke="#00e000" stroke-width="0.9"/><line x1="889.7" y1="122.2" x2="889.7" y2="125.7" stroke="#00d000" stroke-width="0.9"/><rect x="888.00" y="122.80" width="3.4" height="2.40" fill="#fff" stroke="#00d800" stroke-width="0.55"/><line x1="895.0" y1="124.0" x2="895.0" y2="128.1" stroke="#00d000" stroke-width="0.9"/><rect x="893.30" y="124.20" width="3.4" height="3.50" fill="#fff" stroke="#00d800" stroke-width="0.55"/><line x1="900.3" y1="121.0" x2="900.3" y2="131.3" stroke="#00d000" stroke-width="0.9"/><rect x="899.00" y="124.60" width="2.5999999999999996" height="2.70" fill="#000" stroke="#00e000" stroke-width="0.9"/><line x1="905.5" y1="121.9" x2="905.5" y2="125.2" stroke="#00d000" stroke-width="0.9"/><rect x="903.80" y="122.60" width="3.4" height="1.40" fill="#00d800"/><line x1="911.0" y1="121.9" x2="911.0" y2="126.6" stroke="#00d000" stroke-width="0.9"/><rect x="909.30" y="122.20" width="3.4" height="2.40" fill="#fff" stroke="#00d800" stroke-width="0.55"/><line x1="916.4" y1="122.8" x2="916.4" y2="126.9" stroke="#00d000" stroke-width="0.9"/><rect x="914.70" y="124.20" width="3.4" height="1.20" fill="#00d800"/><line x1="921.6" y1="122.2" x2="921.6" y2="126.1" stroke="#00d000" stroke-width="0.9"/><rect x="920.30" y="123.40" width="2.5999999999999996" height="1.90" fill="#000" stroke="#00e000" stroke-width="0.9"/><line x1="927.0" y1="117.5" x2="927.0" y2="123.0" stroke="#00d000" stroke-width="0.9"/><rect x="925.70" y="118.30" width="2.5999999999999996" height="4.10" fill="#000" stroke="#00e000" stroke-width="0.9"/><line x1="932.1" y1="117.9" x2="932.1" y2="128.9" stroke="#00d000" stroke-width="0.9"/><rect x="930.80" y="118.50" width="2.5999999999999996" height="6.00" fill="#fff" stroke="#00e000" stroke-width="0.8"/><line x1="937.5" y1="122.2" x2="937.5" y2="128.9" stroke="#00d000" stroke-width="0.9"/><rect x="935.80" y="123.00" width="3.4" height="1.20" fill="#00d800"/><line x1="943.0" y1="122.6" x2="943.0" y2="129.3" stroke="#00d000" stroke-width="0.9"/><rect x="941.70" y="123.20" width="2.5999999999999996" height="5.10" fill="#fff" stroke="#00e000" stroke-width="0.8"/><line x1="948.3" y1="125.7" x2="948.3" y2="130.4" stroke="#00d000" stroke-width="0.9"/><rect x="947.00" y="126.50" width="2.5999999999999996" height="1.80" fill="#000" stroke="#00e000" stroke-width="0.9"/><line x1="953.6" y1="122.8" x2="953.6" y2="127.7" stroke="#00d000" stroke-width="0.9"/><rect x="952.30" y="123.80" width="2.5999999999999996" height="3.10" fill="#000" stroke="#00e000" stroke-width="0.9"/><line x1="959.0" y1="120.3" x2="959.0" y2="123.9" stroke="#00d000" stroke-width="0.9"/><rect x="957.30" y="122.00" width="3.4" height="1.60" fill="#00d800"/><line x1="964.2" y1="118.0" x2="964.2" y2="123.9" stroke="#00d000" stroke-width="0.9"/><rect x="962.50" y="120.80" width="3.4" height="1.90" fill="#00d800"/><line x1="969.9" y1="111.4" x2="969.9" y2="121.7" stroke="#00d000" stroke-width="0.9"/><rect x="968.60" y="113.40" width="2.5999999999999996" height="7.40" fill="#000" stroke="#00e000" stroke-width="0.9"/><line x1="974.9" y1="107.2" x2="974.9" y2="113.8" stroke="#00d000" stroke-width="0.9"/><rect x="973.60" y="109.60" width="2.5999999999999996" height="3.60" fill="#000" stroke="#00e000" stroke-width="0.9"/><line x1="980.4" y1="107.2" x2="980.4" y2="112.8" stroke="#00d000" stroke-width="0.9"/><rect x="978.70" y="109.20" width="3.4" height="1.00" fill="#00d800"/><line x1="985.5" y1="104.8" x2="985.5" y2="113.3" stroke="#00d000" stroke-width="0.9"/><rect x="984.20" y="105.50" width="2.5999999999999996" height="3.60" fill="#000" stroke="#00e000" stroke-width="0.9"/><line x1="990.9" y1="102.0" x2="990.9" y2="109.5" stroke="#00d000" stroke-width="0.9"/><rect x="989.60" y="102.90" width="2.5999999999999996" height="2.20" fill="#000" stroke="#00e000" stroke-width="0.9"/><line x1="996.3" y1="98.8" x2="996.3" y2="103.9" stroke="#00d000" stroke-width="0.9"/><rect x="995.00" y="99.60" width="2.5999999999999996" height="3.60" fill="#000" stroke="#00e000" stroke-width="0.9"/><line x1="1001.5" y1="96.9" x2="1001.5" y2="105.3" stroke="#00d000" stroke-width="0.9"/><rect x="999.80" y="99.90" width="3.4" height="2.40" fill="#fff" stroke="#00d800" stroke-width="0.55"/><line x1="1007.1" y1="93.1" x2="1007.1" y2="105.8" stroke="#00d000" stroke-width="0.9"/><rect x="1005.40" y="102.00" width="3.4" height="1.40" fill="#00d800"/><line x1="1012.4" y1="98.0" x2="1012.4" y2="107.9" stroke="#00d000" stroke-width="0.9"/><rect x="1010.70" y="103.00" width="3.4" height="1.60" fill="#00d800"/><line x1="1017.7" y1="97.3" x2="1017.7" y2="105.3" stroke="#00d000" stroke-width="0.9"/><rect x="1016.40" y="99.60" width="2.5999999999999996" height="4.80" fill="#000" stroke="#00e000" stroke-width="0.9"/><line x1="1022.8" y1="91.2" x2="1022.8" y2="103.0" stroke="#00d000" stroke-width="0.9"/><rect x="1021.10" y="99.90" width="3.4" height="2.40" fill="#fff" stroke="#00d800" stroke-width="0.55"/><line x1="1028.2" y1="97.8" x2="1028.2" y2="103.4" stroke="#00d000" stroke-width="0.9"/><rect x="1026.90" y="98.70" width="2.5999999999999996" height="3.90" fill="#000" stroke="#00e000" stroke-width="0.9"/><line x1="1033.6" y1="91.2" x2="1033.6" y2="99.7" stroke="#00d000" stroke-width="0.9"/><rect x="1032.30" y="92.60" width="2.5999999999999996" height="6.50" fill="#000" stroke="#00e000" stroke-width="0.9"/><rect x="286.5" y="84.5" width="949.8" height="128.5" fill="none" stroke="#c8c8c8" stroke-width="1"/><line x1="1236" y1="102.5" x2="1239" y2="102.5" stroke="#c8c8c8" stroke-width="1"/><line x1="1236" y1="135.0" x2="1239" y2="135.0" stroke="#c8c8c8" stroke-width="1"/><line x1="1236" y1="167.5" x2="1239" y2="167.5" stroke="#c8c8c8" stroke-width="1"/><line x1="1236" y1="200.4" x2="1239" y2="200.4" stroke="#c8c8c8" stroke-width="1"/><line x1="287" y1="213" x2="287" y2="215.5" stroke="#c8c8c8" stroke-width="1"/><line x1="351" y1="213" x2="351" y2="215.5" stroke="#c8c8c8" stroke-width="1"/><line x1="415" y1="213" x2="415" y2="215.5" stroke="#c8c8c8" stroke-width="1"/><line x1="479" y1="213" x2="479" y2="215.5" stroke="#c8c8c8" stroke-width="1"/><line x1="543" y1="213" x2="543" y2="215.5" stroke="#c8c8c8" stroke-width="1"/><line x1="607" y1="213" x2="607" y2="215.5" stroke="#c8c8c8" stroke-width="1"/><line x1="671" y1="213" x2="671" y2="215.5" stroke="#c8c8c8" stroke-width="1"/><line x1="735" y1="213" x2="735" y2="215.5" stroke="#c8c8c8" stroke-width="1"/><line x1="799" y1="213" x2="799" y2="215.5" stroke="#c8c8c8" stroke-width="1"/><line x1="863" y1="213" x2="863" y2="215.5" stroke="#c8c8c8" stroke-width="1"/><line x1="927" y1="213" x2="927" y2="215.5" stroke="#c8c8c8" stroke-width="1"/><line x1="991" y1="213" x2="991" y2="215.5" stroke="#c8c8c8" stroke-width="1"/><path d="M1041.5 84.8 L1048.5 84.8 L1045 88.6 Z" fill="#a0aab8"/></svg><svg class="a" style="left:288.5px;top:88.5px" width="7" height="5" viewBox="0 0 7 5"><path d="M0.5 0.5 L6.5 0.5 L3.5 4.5 Z" fill="#fff"/></svg><div class="t" style="left:298px;top:86.8px;font-size:8.3px;color:#fff">XAUUSD.c,M5&nbsp; 4132.82 4136.59 4132.78 4136.22</div><div class="a" style="left:1237.5px;top:87px;width:37.5px;height:9.8px;background:#fff"></div><div class="t" style="left:1240px;top:87.6px;font-size:8.4px;color:#000">4136.22</div><div class="t" style="left:1241px;top:98.3px;font-size:8.3px;color:#fff">4131.00</div><div class="t" style="left:1241px;top:130.6px;font-size:8.3px;color:#fff">4113.60</div><div class="t" style="left:1241px;top:163.1px;font-size:8.3px;color:#fff">4096.20</div><div class="t" style="left:1241px;top:196.1px;font-size:8.3px;color:#fff">4079.10</div><div class="t" style="left:286.5px;top:216px;font-size:8.3px;color:#fff">10 Nov 2025</div><div class="t" style="left:350.5px;top:216px;font-size:8.3px;color:#fff">10 Nov 15:45</div><div class="t" style="left:414.5px;top:216px;font-size:8.3px;color:#fff">10 Nov 16:45</div><div class="t" style="left:478.5px;top:216px;font-size:8.3px;color:#fff">10 Nov 17:45</div><div class="t" style="left:542.5px;top:216px;font-size:8.3px;color:#fff">10 Nov 18:45</div><div class="t" style="left:606.5px;top:216px;font-size:8.3px;color:#fff">10 Nov 19:45</div><div class="t" style="left:670.5px;top:216px;font-size:8.3px;color:#fff">10 Nov 20:45</div><div class="t" style="left:734.5px;top:216px;font-size:8.3px;color:#fff">10 Nov 21:45</div><div class="t" style="left:798.5px;top:216px;font-size:8.3px;color:#fff">10 Nov 22:45</div><div class="t" style="left:862.5px;top:216px;font-size:8.3px;color:#fff">10 Nov 23:45</div><div class="t" style="left:926.5px;top:216px;font-size:8.3px;color:#fff">11 Nov 01:45</div><div class="t" style="left:990.5px;top:216px;font-size:8.3px;color:#fff">11 Nov 02:45</div><div class="a" style="left:2px;top:244px;width:11px;height:413px;background:#c9d9e9"></div><svg class="a" style="left:3.5px;top:235px" width="6" height="6" viewBox="0 0 6 6"><path d="M0.5 0.5 L5.5 5.5 M5.5 0.5 L0.5 5.5" stroke="#111" stroke-width="1.2"/></svg><div class="t" style="left:-2px;top:641.5px;font-size:9.2px;color:#222;transform:rotate(-90deg);transform-origin:center">终端</div><div class="a" style="left:12.8px;top:233px;width:0.9px;height:424px;background:#b4b4b4"></div><div class="a" style="left:13.5px;top:232.8px;width:1262.3px;height:0.8px;background:#d4d4d4"></div><div class="a" style="left:13.5px;top:233.5px;width:1262.3px;height:17.599999999999994px;background:#fff"></div><div class="a" style="left:13.5px;top:250.6px;width:1262.3px;height:1px;background:#e2e2e2"></div><div class="a" style="left:13.5px;top:251.10px;width:1262.3px;height:16.77px;background:#fff"></div><div class="a" style="left:13.5px;top:267.27px;width:1262.3px;height:1px;background:#dcdcdc"></div><div class="a" style="left:507.20px;top:251.90px;width:65.40px;height:14.87px;background:#ffa2a2"></div><div class="a" style="left:13.5px;top:267.77px;width:1262.3px;height:16.77px;background:#eaeaea"></div><div class="a" style="left:13.5px;top:283.93px;width:1262.3px;height:1px;background:#dcdcdc"></div><div class="a" style="left:13.5px;top:284.43px;width:1262.3px;height:16.77px;background:#fff"></div><div class="a" style="left:13.5px;top:300.60px;width:1262.3px;height:1px;background:#dcdcdc"></div><div class="a" style="left:507.20px;top:285.23px;width:65.40px;height:14.87px;background:#ffa2a2"></div><div class="a" style="left:13.5px;top:301.10px;width:1262.3px;height:16.77px;background:#eaeaea"></div><div class="a" style="left:13.5px;top:317.27px;width:1262.3px;height:1px;background:#dcdcdc"></div><div class="a" style="left:507.20px;top:301.90px;width:65.40px;height:14.87px;background:#ffa2a2"></div><div class="a" style="left:13.5px;top:317.77px;width:1262.3px;height:16.77px;background:#fff"></div><div class="a" style="left:13.5px;top:333.94px;width:1262.3px;height:1px;background:#dcdcdc"></div><div class="a" style="left:507.20px;top:318.57px;width:65.40px;height:14.87px;background:#ffa2a2"></div><div class="a" style="left:13.5px;top:334.44px;width:1262.3px;height:16.77px;background:#eaeaea"></div><div class="a" style="left:13.5px;top:350.60px;width:1262.3px;height:1px;background:#dcdcdc"></div><div class="a" style="left:507.20px;top:335.24px;width:65.40px;height:14.87px;background:#ffa2a2"></div><div class="a" style="left:13.5px;top:351.10px;width:1262.3px;height:16.77px;background:#fff"></div><div class="a" style="left:13.5px;top:367.27px;width:1262.3px;height:1px;background:#dcdcdc"></div><div class="a" style="left:13.5px;top:367.77px;width:1262.3px;height:16.77px;background:#eaeaea"></div><div class="a" style="left:13.5px;top:383.94px;width:1262.3px;height:1px;background:#dcdcdc"></div><div class="a" style="left:507.20px;top:368.57px;width:65.40px;height:14.87px;background:#ffa2a2"></div><div class="a" style="left:13.5px;top:384.44px;width:1262.3px;height:16.77px;background:#fff"></div><div class="a" style="left:13.5px;top:400.60px;width:1262.3px;height:1px;background:#dcdcdc"></div><div class="a" style="left:13.5px;top:401.10px;width:1262.3px;height:16.77px;background:#eaeaea"></div><div class="a" style="left:13.5px;top:417.27px;width:1262.3px;height:1px;background:#dcdcdc"></div><div class="a" style="left:13.5px;top:417.77px;width:1262.3px;height:16.77px;background:#fff"></div><div class="a" style="left:13.5px;top:433.94px;width:1262.3px;height:1px;background:#dcdcdc"></div><div class="a" style="left:507.20px;top:418.57px;width:65.40px;height:14.87px;background:#ffa2a2"></div><div class="a" style="left:13.5px;top:434.44px;width:1262.3px;height:16.77px;background:#eaeaea"></div><div class="a" style="left:13.5px;top:450.60px;width:1262.3px;height:1px;background:#dcdcdc"></div><div class="a" style="left:13.5px;top:451.10px;width:1262.3px;height:16.77px;background:#fff"></div><div class="a" style="left:13.5px;top:467.27px;width:1262.3px;height:1px;background:#dcdcdc"></div><div class="a" style="left:507.20px;top:451.90px;width:65.40px;height:14.87px;background:#ffa2a2"></div><div class="a" style="left:13.5px;top:467.77px;width:1262.3px;height:16.77px;background:#eaeaea"></div><div class="a" style="left:13.5px;top:483.94px;width:1262.3px;height:1px;background:#dcdcdc"></div><div class="a" style="left:574.80px;top:468.57px;width:64.60px;height:14.87px;background:#66e65a"></div><div class="a" style="left:13.5px;top:484.44px;width:1262.3px;height:16.77px;background:#fff"></div><div class="a" style="left:13.5px;top:500.61px;width:1262.3px;height:1px;background:#dcdcdc"></div><div class="a" style="left:507.20px;top:485.24px;width:65.40px;height:14.87px;background:#ffa2a2"></div><div class="a" style="left:13.5px;top:501.11px;width:1262.3px;height:16.77px;background:#eaeaea"></div><div class="a" style="left:13.5px;top:517.27px;width:1262.3px;height:1px;background:#dcdcdc"></div><div class="a" style="left:507.20px;top:501.91px;width:65.40px;height:14.87px;background:#ffa2a2"></div><div class="a" style="left:13.5px;top:517.77px;width:1262.3px;height:16.77px;background:#fff"></div><div class="a" style="left:13.5px;top:533.94px;width:1262.3px;height:1px;background:#dcdcdc"></div><div class="a" style="left:507.20px;top:518.57px;width:65.40px;height:14.87px;background:#ffa2a2"></div><div class="a" style="left:13.5px;top:534.44px;width:1262.3px;height:16.77px;background:#eaeaea"></div><div class="a" style="left:13.5px;top:550.61px;width:1262.3px;height:1px;background:#dcdcdc"></div><div class="a" style="left:13.5px;top:551.11px;width:1262.3px;height:16.77px;background:#fff"></div><div class="a" style="left:13.5px;top:567.27px;width:1262.3px;height:1px;background:#dcdcdc"></div><div class="a" style="left:13.5px;top:567.77px;width:1262.3px;height:16.77px;background:#eaeaea"></div><div class="a" style="left:13.5px;top:583.94px;width:1262.3px;height:1px;background:#dcdcdc"></div><div class="a" style="left:507.20px;top:568.57px;width:65.40px;height:14.87px;background:#ffa2a2"></div><div class="a" style="left:13.5px;top:584.44px;width:1262.3px;height:16.77px;background:#fff"></div><div class="a" style="left:13.5px;top:600.61px;width:1262.3px;height:1px;background:#dcdcdc"></div><div class="a" style="left:100.5px;top:233.5px;width:1px;height:367.61px;background:#dedede"></div><div class="a" style="left:249.3px;top:233.5px;width:1px;height:367.61px;background:#dedede"></div><div class="a" style="left:316.7px;top:233.5px;width:1px;height:367.61px;background:#dedede"></div><div class="a" style="left:370.9px;top:233.5px;width:1px;height:367.61px;background:#dedede"></div><div class="a" style="left:437.7px;top:233.5px;width:1px;height:367.61px;background:#dedede"></div><div class="a" style="left:505.9px;top:233.5px;width:1px;height:367.61px;background:#dedede"></div><div class="a" style="left:573.5px;top:233.5px;width:1px;height:367.61px;background:#dedede"></div><div class="a" style="left:640.3px;top:233.5px;width:1px;height:367.61px;background:#dedede"></div><div class="a" style="left:789.1px;top:233.5px;width:1px;height:367.61px;background:#dedede"></div><div class="a" style="left:856.3px;top:233.5px;width:1px;height:367.61px;background:#dedede"></div><div class="a" style="left:923.7px;top:233.5px;width:1px;height:367.61px;background:#dedede"></div><div class="a" style="left:991.1px;top:233.5px;width:1px;height:367.61px;background:#dedede"></div><div class="a" style="left:1064.9px;top:233.5px;width:1px;height:367.61px;background:#dedede"></div><div class="t" style="left:19px;top:236.8px;font-size:10.6px;color:#111"><span style="font-size:0.94em">订单</span></div><div class="t r" style="right:1046.70px;top:236.8px;font-size:10.6px;color:#111"><span style="font-size:0.94em">时间</span></div><div class="t r" style="right:966.80px;top:236.8px;font-size:10.6px;color:#111"><span style="font-size:0.94em">类型</span></div><div class="t r" style="right:912.60px;top:236.8px;font-size:10.6px;color:#111"><span style="font-size:0.94em">手数</span></div><div class="t r" style="right:845.80px;top:236.8px;font-size:10.6px;color:#111"><span style="font-size:0.94em">交易品种</span></div><div class="t r" style="right:777.60px;top:236.8px;font-size:10.6px;color:#111"><span style="font-size:0.94em">价格</span></div><div class="t r" style="right:710.00px;top:236.8px;font-size:10.6px;color:#111"><span style="font-size:0.94em">止损</span></div><div class="t r" style="right:643.20px;top:236.8px;font-size:10.6px;color:#111"><span style="font-size:0.94em">止盈</span></div><div class="t r" style="right:494.40px;top:236.8px;font-size:10.6px;color:#111"><span style="font-size:0.94em">时间</span></div><div class="t r" style="right:427.20px;top:236.8px;font-size:10.6px;color:#111"><span style="font-size:0.94em">价格</span></div><div class="t r" style="right:359.80px;top:236.8px;font-size:10.6px;color:#111"><span style="font-size:0.94em">手续费</span></div><div class="t r" style="right:292.40px;top:236.8px;font-size:10.6px;color:#111"><span style="font-size:0.94em">库存费</span></div><div class="t r" style="right:218.60px;top:236.8px;font-size:10.6px;color:#111"><span style="font-size:0.94em">获利</span></div><div class="t r" style="right:8.20px;top:236.8px;font-size:10.6px;color:#111"><span style="font-size:0.94em">注释</span></div><svg class="a" style="left:239.5px;top:239px" width="5" height="7" viewBox="0 0 5 7"><path d="M1 6 L4 1" stroke="#999" stroke-width="0.8"/></svg><svg class="a" style="left:16px;top:252.90px" width="13" height="14" viewBox="0 0 13 14"><path d="M1.3 0.8 L7.8 0.8 L10.2 3.2 L10.2 11.4 Q10.2 12 9.6 12 L1.9 12 Q1.3 12 1.3 11.4 Z" fill="#f8f8f8" stroke="#8c8c8c" stroke-width="1"/><path d="M7.6 0.8 L7.6 3.4 L10.2 3.4" fill="none" stroke="#666" stroke-width="0.9"/><circle cx="9.2" cy="9.7" r="3.1" fill="#2a8ae8"/><circle cx="8.5" cy="8.9" r="1.1" fill="#fff" opacity="0.35"/></svg><div class="t" style="left:32px;top:254.10px;font-size:10.6px;color:#111">16567921</div><div class="t r" style="right:1033.70px;top:254.10px;font-size:10.6px;color:#111">2025.11.10 04:09:00</div><div class="t r" style="right:966.30px;top:254.10px;font-size:10.6px;color:#111">buy</div><div class="t r" style="right:912.10px;top:254.10px;font-size:10.6px;color:#111">0.03</div><div class="t r" style="right:845.30px;top:254.10px;font-size:10.6px;color:#111">xauusd.c</div><div class="t r" style="right:777.10px;top:254.10px;font-size:10.6px;color:#111">4040.97</div><div class="t r" style="right:709.50px;top:254.10px;font-size:10.6px;color:#111">4042.97</div><div class="t r" style="right:642.70px;top:254.10px;font-size:10.6px;color:#111">0.00</div><div class="t r" style="right:493.90px;top:254.10px;font-size:10.6px;color:#111">2025.11.10 04:15:20</div><div class="t r" style="right:426.70px;top:254.10px;font-size:10.6px;color:#111">4042.92</div><div class="t r" style="right:359.30px;top:254.10px;font-size:10.6px;color:#111">0.00</div><div class="t r" style="right:291.90px;top:254.10px;font-size:10.6px;color:#111">0.00</div><div class="t r" style="right:218.10px;top:254.10px;font-size:10.6px;color:#111">5.85</div><div class="t r" style="right:7.70px;top:254.10px;font-size:10.6px;color:#111"><span style="font-size:0.94em">海龟策略黄金</span>A[sl]</div><svg class="a" style="left:16px;top:269.57px" width="13" height="14" viewBox="0 0 13 14"><path d="M1.3 0.8 L7.8 0.8 L10.2 3.2 L10.2 11.4 Q10.2 12 9.6 12 L1.9 12 Q1.3 12 1.3 11.4 Z" fill="#f8f8f8" stroke="#8c8c8c" stroke-width="1"/><path d="M7.6 0.8 L7.6 3.4 L10.2 3.4" fill="none" stroke="#666" stroke-width="0.9"/><circle cx="9.2" cy="9.7" r="3.1" fill="#2a8ae8"/><circle cx="8.5" cy="8.9" r="1.1" fill="#fff" opacity="0.35"/></svg><div class="t" style="left:32px;top:270.77px;font-size:10.6px;color:#111">16568117</div><div class="t r" style="right:1033.70px;top:270.77px;font-size:10.6px;color:#111">2025.11.10 04:14:01</div><div class="t r" style="right:966.30px;top:270.77px;font-size:10.6px;color:#111">buy</div><div class="t r" style="right:912.10px;top:270.77px;font-size:10.6px;color:#111">0.03</div><div class="t r" style="right:845.30px;top:270.77px;font-size:10.6px;color:#111">xauusd.c</div><div class="t r" style="right:777.10px;top:270.77px;font-size:10.6px;color:#111">4041.82</div><div class="t r" style="right:709.50px;top:270.77px;font-size:10.6px;color:#111">4043.32</div><div class="t r" style="right:642.70px;top:270.77px;font-size:10.6px;color:#111">0.00</div><div class="t r" style="right:493.90px;top:270.77px;font-size:10.6px;color:#111">2025.11.10 04:24:34</div><div class="t r" style="right:426.70px;top:270.77px;font-size:10.6px;color:#111">4044.08</div><div class="t r" style="right:359.30px;top:270.77px;font-size:10.6px;color:#111">0.00</div><div class="t r" style="right:291.90px;top:270.77px;font-size:10.6px;color:#111">0.00</div><div class="t r" style="right:218.10px;top:270.77px;font-size:10.6px;color:#111">6.78</div><div class="t r" style="right:7.70px;top:270.77px;font-size:10.6px;color:#111"><span style="font-size:0.94em">海龟策略黄金</span>B</div><svg class="a" style="left:16px;top:286.23px" width="13" height="14" viewBox="0 0 13 14"><path d="M1.3 0.8 L7.8 0.8 L10.2 3.2 L10.2 11.4 Q10.2 12 9.6 12 L1.9 12 Q1.3 12 1.3 11.4 Z" fill="#f8f8f8" stroke="#8c8c8c" stroke-width="1"/><path d="M7.6 0.8 L7.6 3.4 L10.2 3.4" fill="none" stroke="#666" stroke-width="0.9"/><circle cx="9.2" cy="9.7" r="3.1" fill="#2a8ae8"/><circle cx="8.5" cy="8.9" r="1.1" fill="#fff" opacity="0.35"/></svg><div class="t" style="left:32px;top:287.43px;font-size:10.6px;color:#111">16568289</div><div class="t r" style="right:1033.70px;top:287.43px;font-size:10.6px;color:#111">2025.11.10 04:17:00</div><div class="t r" style="right:966.30px;top:287.43px;font-size:10.6px;color:#111">buy</div><div class="t r" style="right:912.10px;top:287.43px;font-size:10.6px;color:#111">0.03</div><div class="t r" style="right:845.30px;top:287.43px;font-size:10.6px;color:#111">xauusd.c</div><div class="t r" style="right:777.10px;top:287.43px;font-size:10.6px;color:#111">4044.88</div><div class="t r" style="right:709.50px;top:287.43px;font-size:10.6px;color:#111">4046.88</div><div class="t r" style="right:642.70px;top:287.43px;font-size:10.6px;color:#111">0.00</div><div class="t r" style="right:493.90px;top:287.43px;font-size:10.6px;color:#111">2025.11.10 04:19:14</div><div class="t r" style="right:426.70px;top:287.43px;font-size:10.6px;color:#111">4046.86</div><div class="t r" style="right:359.30px;top:287.43px;font-size:10.6px;color:#111">0.00</div><div class="t r" style="right:291.90px;top:287.43px;font-size:10.6px;color:#111">0.00</div><div class="t r" style="right:218.10px;top:287.43px;font-size:10.6px;color:#111">5.94</div><div class="t r" style="right:7.70px;top:287.43px;font-size:10.6px;color:#111"><span style="font-size:0.94em">海龟策略黄金</span>A[sl]</div><svg class="a" style="left:16px;top:302.90px" width="13" height="14" viewBox="0 0 13 14"><path d="M1.3 0.8 L7.8 0.8 L10.2 3.2 L10.2 11.4 Q10.2 12 9.6 12 L1.9 12 Q1.3 12 1.3 11.4 Z" fill="#f8f8f8" stroke="#8c8c8c" stroke-width="1"/><path d="M7.6 0.8 L7.6 3.4 L10.2 3.4" fill="none" stroke="#666" stroke-width="0.9"/><circle cx="9.2" cy="9.7" r="3.1" fill="#2a8ae8"/><circle cx="8.5" cy="8.9" r="1.1" fill="#fff" opacity="0.35"/></svg><div class="t" style="left:32px;top:304.10px;font-size:10.6px;color:#111">16568563</div><div class="t r" style="right:1033.70px;top:304.10px;font-size:10.6px;color:#111">2025.11.10 04:22:02</div><div class="t r" style="right:966.30px;top:304.10px;font-size:10.6px;color:#111">buy</div><div class="t r" style="right:912.10px;top:304.10px;font-size:10.6px;color:#111">0.03</div><div class="t r" style="right:845.30px;top:304.10px;font-size:10.6px;color:#111">xauusd.c</div><div class="t r" style="right:777.10px;top:304.10px;font-size:10.6px;color:#111">4045.59</div><div class="t r" style="right:709.50px;top:304.10px;font-size:10.6px;color:#111">4045.13</div><div class="t r" style="right:642.70px;top:304.10px;font-size:10.6px;color:#111">0.00</div><div class="t r" style="right:493.90px;top:304.10px;font-size:10.6px;color:#111">2025.11.10 04:38:18</div><div class="t r" style="right:426.70px;top:304.10px;font-size:10.6px;color:#111">4045.10</div><div class="t r" style="right:359.30px;top:304.10px;font-size:10.6px;color:#111">0.00</div><div class="t r" style="right:291.90px;top:304.10px;font-size:10.6px;color:#111">0.00</div><div class="t r" style="right:218.10px;top:304.10px;font-size:10.6px;color:#111">-1.47</div><div class="t r" style="right:7.70px;top:304.10px;font-size:10.6px;color:#111"><span style="font-size:0.94em">海龟策略黄金</span>A[sl]</div><svg class="a" style="left:16px;top:319.57px" width="13" height="14" viewBox="0 0 13 14"><path d="M1.3 0.8 L7.8 0.8 L10.2 3.2 L10.2 11.4 Q10.2 12 9.6 12 L1.9 12 Q1.3 12 1.3 11.4 Z" fill="#f8f8f8" stroke="#8c8c8c" stroke-width="1"/><path d="M7.6 0.8 L7.6 3.4 L10.2 3.4" fill="none" stroke="#666" stroke-width="0.9"/><circle cx="9.2" cy="9.7" r="3.1" fill="#2a8ae8"/><circle cx="8.5" cy="8.9" r="1.1" fill="#fff" opacity="0.35"/></svg><div class="t" style="left:32px;top:320.77px;font-size:10.6px;color:#111">16568877</div><div class="t r" style="right:1033.70px;top:320.77px;font-size:10.6px;color:#111">2025.11.10 04:29:00</div><div class="t r" style="right:966.30px;top:320.77px;font-size:10.6px;color:#111">buy</div><div class="t r" style="right:912.10px;top:320.77px;font-size:10.6px;color:#111">0.03</div><div class="t r" style="right:845.30px;top:320.77px;font-size:10.6px;color:#111">xauusd.c</div><div class="t r" style="right:777.10px;top:320.77px;font-size:10.6px;color:#111">4040.66</div><div class="t r" style="right:709.50px;top:320.77px;font-size:10.6px;color:#111">4045.13</div><div class="t r" style="right:642.70px;top:320.77px;font-size:10.6px;color:#111">0.00</div><div class="t r" style="right:493.90px;top:320.77px;font-size:10.6px;color:#111">2025.11.10 04:38:18</div><div class="t r" style="right:426.70px;top:320.77px;font-size:10.6px;color:#111">4045.10</div><div class="t r" style="right:359.30px;top:320.77px;font-size:10.6px;color:#111">0.00</div><div class="t r" style="right:291.90px;top:320.77px;font-size:10.6px;color:#111">0.00</div><div class="t r" style="right:218.10px;top:320.77px;font-size:10.6px;color:#111">13.32</div><div class="t r" style="right:7.70px;top:320.77px;font-size:10.6px;color:#111"><span style="font-size:0.94em">海龟策略黄金</span>A-NS[sl]</div><svg class="a" style="left:16px;top:336.24px" width="13" height="14" viewBox="0 0 13 14"><path d="M1.3 0.8 L7.8 0.8 L10.2 3.2 L10.2 11.4 Q10.2 12 9.6 12 L1.9 12 Q1.3 12 1.3 11.4 Z" fill="#f8f8f8" stroke="#8c8c8c" stroke-width="1"/><path d="M7.6 0.8 L7.6 3.4 L10.2 3.4" fill="none" stroke="#666" stroke-width="0.9"/><circle cx="9.2" cy="9.7" r="3.1" fill="#2a8ae8"/><circle cx="8.5" cy="8.9" r="1.1" fill="#fff" opacity="0.35"/></svg><div class="t" style="left:32px;top:337.44px;font-size:10.6px;color:#111">16569334</div><div class="t r" style="right:1033.70px;top:337.44px;font-size:10.6px;color:#111">2025.11.10 04:38:01</div><div class="t r" style="right:966.30px;top:337.44px;font-size:10.6px;color:#111">buy</div><div class="t r" style="right:912.10px;top:337.44px;font-size:10.6px;color:#111">0.03</div><div class="t r" style="right:845.30px;top:337.44px;font-size:10.6px;color:#111">xauusd.c</div><div class="t r" style="right:777.10px;top:337.44px;font-size:10.6px;color:#111">4045.70</div><div class="t r" style="right:709.50px;top:337.44px;font-size:10.6px;color:#111">4047.20</div><div class="t r" style="right:642.70px;top:337.44px;font-size:10.6px;color:#111">0.00</div><div class="t r" style="right:493.90px;top:337.44px;font-size:10.6px;color:#111">2025.11.10 05:01:56</div><div class="t r" style="right:426.70px;top:337.44px;font-size:10.6px;color:#111">4047.18</div><div class="t r" style="right:359.30px;top:337.44px;font-size:10.6px;color:#111">0.00</div><div class="t r" style="right:291.90px;top:337.44px;font-size:10.6px;color:#111">0.00</div><div class="t r" style="right:218.10px;top:337.44px;font-size:10.6px;color:#111">4.44</div><div class="t r" style="right:7.70px;top:337.44px;font-size:10.6px;color:#111"><span style="font-size:0.94em">海龟策略黄金</span>B[sl]</div><svg class="a" style="left:16px;top:352.90px" width="13" height="14" viewBox="0 0 13 14"><path d="M1.3 0.8 L7.8 0.8 L10.2 3.2 L10.2 11.4 Q10.2 12 9.6 12 L1.9 12 Q1.3 12 1.3 11.4 Z" fill="#f8f8f8" stroke="#8c8c8c" stroke-width="1"/><path d="M7.6 0.8 L7.6 3.4 L10.2 3.4" fill="none" stroke="#666" stroke-width="0.9"/><circle cx="9.2" cy="9.7" r="3.1" fill="#2a8ae8"/><circle cx="8.5" cy="8.9" r="1.1" fill="#fff" opacity="0.35"/></svg><div class="t" style="left:32px;top:354.10px;font-size:10.6px;color:#111">16569446</div><div class="t r" style="right:1033.70px;top:354.10px;font-size:10.6px;color:#111">2025.11.10 04:41:00</div><div class="t r" style="right:966.30px;top:354.10px;font-size:10.6px;color:#111">buy</div><div class="t r" style="right:912.10px;top:354.10px;font-size:10.6px;color:#111">0.03</div><div class="t r" style="right:845.30px;top:354.10px;font-size:10.6px;color:#111">xauusd.c</div><div class="t r" style="right:777.10px;top:354.10px;font-size:10.6px;color:#111">4045.41</div><div class="t r" style="right:709.50px;top:354.10px;font-size:10.6px;color:#111">4047.41</div><div class="t r" style="right:642.70px;top:354.10px;font-size:10.6px;color:#111">0.00</div><div class="t r" style="right:493.90px;top:354.10px;font-size:10.6px;color:#111">2025.11.10 05:00:06</div><div class="t r" style="right:426.70px;top:354.10px;font-size:10.6px;color:#111">4047.44</div><div class="t r" style="right:359.30px;top:354.10px;font-size:10.6px;color:#111">0.00</div><div class="t r" style="right:291.90px;top:354.10px;font-size:10.6px;color:#111">0.00</div><div class="t r" style="right:218.10px;top:354.10px;font-size:10.6px;color:#111">6.09</div><div class="t r" style="right:7.70px;top:354.10px;font-size:10.6px;color:#111"><span style="font-size:0.94em">海龟策略黄金</span>A[sl]</div><svg class="a" style="left:16px;top:369.57px" width="13" height="14" viewBox="0 0 13 14"><path d="M1.3 0.8 L7.8 0.8 L10.2 3.2 L10.2 11.4 Q10.2 12 9.6 12 L1.9 12 Q1.3 12 1.3 11.4 Z" fill="#f8f8f8" stroke="#8c8c8c" stroke-width="1"/><path d="M7.6 0.8 L7.6 3.4 L10.2 3.4" fill="none" stroke="#666" stroke-width="0.9"/><circle cx="9.2" cy="9.7" r="3.1" fill="#2a8ae8"/><circle cx="8.5" cy="8.9" r="1.1" fill="#fff" opacity="0.35"/></svg><div class="t" style="left:32px;top:370.77px;font-size:10.6px;color:#111">16569665</div><div class="t r" style="right:1033.70px;top:370.77px;font-size:10.6px;color:#111">2025.11.10 05:03:00</div><div class="t r" style="right:966.30px;top:370.77px;font-size:10.6px;color:#111">buy</div><div class="t r" style="right:912.10px;top:370.77px;font-size:10.6px;color:#111">0.03</div><div class="t r" style="right:845.30px;top:370.77px;font-size:10.6px;color:#111">xauusd.c</div><div class="t r" style="right:777.10px;top:370.77px;font-size:10.6px;color:#111">4047.03</div><div class="t r" style="right:709.50px;top:370.77px;font-size:10.6px;color:#111">4049.23</div><div class="t r" style="right:642.70px;top:370.77px;font-size:10.6px;color:#111">0.00</div><div class="t r" style="right:493.90px;top:370.77px;font-size:10.6px;color:#111">2025.11.10 05:48:35</div><div class="t r" style="right:426.70px;top:370.77px;font-size:10.6px;color:#111">4048.86</div><div class="t r" style="right:359.30px;top:370.77px;font-size:10.6px;color:#111">0.00</div><div class="t r" style="right:291.90px;top:370.77px;font-size:10.6px;color:#111">0.00</div><div class="t r" style="right:218.10px;top:370.77px;font-size:10.6px;color:#111">5.49</div><div class="t r" style="right:7.70px;top:370.77px;font-size:10.6px;color:#111"><span style="font-size:0.94em">海龟策略黄金</span>A[sl]</div><svg class="a" style="left:16px;top:386.24px" width="13" height="14" viewBox="0 0 13 14"><path d="M1.3 0.8 L7.8 0.8 L10.2 3.2 L10.2 11.4 Q10.2 12 9.6 12 L1.9 12 Q1.3 12 1.3 11.4 Z" fill="#f8f8f8" stroke="#8c8c8c" stroke-width="1"/><path d="M7.6 0.8 L7.6 3.4 L10.2 3.4" fill="none" stroke="#666" stroke-width="0.9"/><circle cx="9.2" cy="9.7" r="3.1" fill="#2a8ae8"/><circle cx="8.5" cy="8.9" r="1.1" fill="#fff" opacity="0.35"/></svg><div class="t" style="left:32px;top:387.44px;font-size:10.6px;color:#111">16570329</div><div class="t r" style="right:1033.70px;top:387.44px;font-size:10.6px;color:#111">2025.11.10 05:52:00</div><div class="t r" style="right:966.30px;top:387.44px;font-size:10.6px;color:#111">buy</div><div class="t r" style="right:912.10px;top:387.44px;font-size:10.6px;color:#111">0.03</div><div class="t r" style="right:845.30px;top:387.44px;font-size:10.6px;color:#111">xauusd.c</div><div class="t r" style="right:777.10px;top:387.44px;font-size:10.6px;color:#111">4048.43</div><div class="t r" style="right:709.50px;top:387.44px;font-size:10.6px;color:#111">4052.83</div><div class="t r" style="right:642.70px;top:387.44px;font-size:10.6px;color:#111">0.00</div><div class="t r" style="right:493.90px;top:387.44px;font-size:10.6px;color:#111">2025.11.10 06:10:47</div><div class="t r" style="right:426.70px;top:387.44px;font-size:10.6px;color:#111">4055.74</div><div class="t r" style="right:359.30px;top:387.44px;font-size:10.6px;color:#111">0.00</div><div class="t r" style="right:291.90px;top:387.44px;font-size:10.6px;color:#111">0.00</div><div class="t r" style="right:218.10px;top:387.44px;font-size:10.6px;color:#111">21.93</div><div class="t r" style="right:7.70px;top:387.44px;font-size:10.6px;color:#111"><span style="font-size:0.94em">海龟策略黄金</span>A</div><svg class="a" style="left:16px;top:402.90px" width="13" height="14" viewBox="0 0 13 14"><path d="M1.3 0.8 L7.8 0.8 L10.2 3.2 L10.2 11.4 Q10.2 12 9.6 12 L1.9 12 Q1.3 12 1.3 11.4 Z" fill="#f8f8f8" stroke="#8c8c8c" stroke-width="1"/><path d="M7.6 0.8 L7.6 3.4 L10.2 3.4" fill="none" stroke="#666" stroke-width="0.9"/><circle cx="9.2" cy="9.7" r="3.1" fill="#2a8ae8"/><circle cx="8.5" cy="8.9" r="1.1" fill="#fff" opacity="0.35"/></svg><div class="t" style="left:32px;top:404.10px;font-size:10.6px;color:#111">16570408</div><div class="t r" style="right:1033.70px;top:404.10px;font-size:10.6px;color:#111">2025.11.10 05:58:00</div><div class="t r" style="right:966.30px;top:404.10px;font-size:10.6px;color:#111">buy</div><div class="t r" style="right:912.10px;top:404.10px;font-size:10.6px;color:#111">0.03</div><div class="t r" style="right:845.30px;top:404.10px;font-size:10.6px;color:#111">xauusd.c</div><div class="t r" style="right:777.10px;top:404.10px;font-size:10.6px;color:#111">4049.95</div><div class="t r" style="right:709.50px;top:404.10px;font-size:10.6px;color:#111">4051.45</div><div class="t r" style="right:642.70px;top:404.10px;font-size:10.6px;color:#111">0.00</div><div class="t r" style="right:493.90px;top:404.10px;font-size:10.6px;color:#111">2025.11.10 06:10:48</div><div class="t r" style="right:426.70px;top:404.10px;font-size:10.6px;color:#111">4055.71</div><div class="t r" style="right:359.30px;top:404.10px;font-size:10.6px;color:#111">0.00</div><div class="t r" style="right:291.90px;top:404.10px;font-size:10.6px;color:#111">0.00</div><div class="t r" style="right:218.10px;top:404.10px;font-size:10.6px;color:#111">17.28</div><div class="t r" style="right:7.70px;top:404.10px;font-size:10.6px;color:#111"><span style="font-size:0.94em">海龟策略黄金</span>B</div><svg class="a" style="left:16px;top:419.57px" width="13" height="14" viewBox="0 0 13 14"><path d="M1.3 0.8 L7.8 0.8 L10.2 3.2 L10.2 11.4 Q10.2 12 9.6 12 L1.9 12 Q1.3 12 1.3 11.4 Z" fill="#f8f8f8" stroke="#8c8c8c" stroke-width="1"/><path d="M7.6 0.8 L7.6 3.4 L10.2 3.4" fill="none" stroke="#666" stroke-width="0.9"/><circle cx="9.2" cy="9.7" r="3.1" fill="#2a8ae8"/><circle cx="8.5" cy="8.9" r="1.1" fill="#fff" opacity="0.35"/></svg><div class="t" style="left:32px;top:420.77px;font-size:10.6px;color:#111">16570716</div><div class="t r" style="right:1033.70px;top:420.77px;font-size:10.6px;color:#111">2025.11.10 06:11:00</div><div class="t r" style="right:966.30px;top:420.77px;font-size:10.6px;color:#111">buy</div><div class="t r" style="right:912.10px;top:420.77px;font-size:10.6px;color:#111">0.03</div><div class="t r" style="right:845.30px;top:420.77px;font-size:10.6px;color:#111">xauusd.c</div><div class="t r" style="right:777.10px;top:420.77px;font-size:10.6px;color:#111">4055.83</div><div class="t r" style="right:709.50px;top:420.77px;font-size:10.6px;color:#111">4055.08</div><div class="t r" style="right:642.70px;top:420.77px;font-size:10.6px;color:#111">0.00</div><div class="t r" style="right:493.90px;top:420.77px;font-size:10.6px;color:#111">2025.11.10 07:26:09</div><div class="t r" style="right:426.70px;top:420.77px;font-size:10.6px;color:#111">4055.03</div><div class="t r" style="right:359.30px;top:420.77px;font-size:10.6px;color:#111">0.00</div><div class="t r" style="right:291.90px;top:420.77px;font-size:10.6px;color:#111">0.00</div><div class="t r" style="right:218.10px;top:420.77px;font-size:10.6px;color:#111">-2.40</div><div class="t r" style="right:7.70px;top:420.77px;font-size:10.6px;color:#111"><span style="font-size:0.94em">海龟策略黄金</span>A[sl]</div><svg class="a" style="left:16px;top:436.24px" width="13" height="14" viewBox="0 0 13 14"><path d="M1.3 0.8 L7.8 0.8 L10.2 3.2 L10.2 11.4 Q10.2 12 9.6 12 L1.9 12 Q1.3 12 1.3 11.4 Z" fill="#f8f8f8" stroke="#8c8c8c" stroke-width="1"/><path d="M7.6 0.8 L7.6 3.4 L10.2 3.4" fill="none" stroke="#666" stroke-width="0.9"/><circle cx="9.2" cy="9.7" r="3.1" fill="#2a8ae8"/><circle cx="8.5" cy="8.9" r="1.1" fill="#fff" opacity="0.35"/></svg><div class="t" style="left:32px;top:437.44px;font-size:10.6px;color:#111">16570994</div><div class="t r" style="right:1033.70px;top:437.44px;font-size:10.6px;color:#111">2025.11.10 06:32:02</div><div class="t r" style="right:966.30px;top:437.44px;font-size:10.6px;color:#111">buy</div><div class="t r" style="right:912.10px;top:437.44px;font-size:10.6px;color:#111">0.03</div><div class="t r" style="right:845.30px;top:437.44px;font-size:10.6px;color:#111">xauusd.c</div><div class="t r" style="right:777.10px;top:437.44px;font-size:10.6px;color:#111">4055.52</div><div class="t r" style="right:709.50px;top:437.44px;font-size:10.6px;color:#111">4057.02</div><div class="t r" style="right:642.70px;top:437.44px;font-size:10.6px;color:#111">0.00</div><div class="t r" style="right:493.90px;top:437.44px;font-size:10.6px;color:#111">2025.11.10 07:32:32</div><div class="t r" style="right:426.70px;top:437.44px;font-size:10.6px;color:#111">4059.63</div><div class="t r" style="right:359.30px;top:437.44px;font-size:10.6px;color:#111">0.00</div><div class="t r" style="right:291.90px;top:437.44px;font-size:10.6px;color:#111">0.00</div><div class="t r" style="right:218.10px;top:437.44px;font-size:10.6px;color:#111">12.33</div><div class="t r" style="right:7.70px;top:437.44px;font-size:10.6px;color:#111"><span style="font-size:0.94em">海龟策略黄金</span>B</div><svg class="a" style="left:16px;top:452.90px" width="13" height="14" viewBox="0 0 13 14"><path d="M1.3 0.8 L7.8 0.8 L10.2 3.2 L10.2 11.4 Q10.2 12 9.6 12 L1.9 12 Q1.3 12 1.3 11.4 Z" fill="#f8f8f8" stroke="#8c8c8c" stroke-width="1"/><path d="M7.6 0.8 L7.6 3.4 L10.2 3.4" fill="none" stroke="#666" stroke-width="0.9"/><circle cx="9.2" cy="9.7" r="3.1" fill="#2a8ae8"/><circle cx="8.5" cy="8.9" r="1.1" fill="#fff" opacity="0.35"/></svg><div class="t" style="left:32px;top:454.10px;font-size:10.6px;color:#111">16571155</div><div class="t r" style="right:1033.70px;top:454.10px;font-size:10.6px;color:#111">2025.11.10 06:47:00</div><div class="t r" style="right:966.30px;top:454.10px;font-size:10.6px;color:#111">buy</div><div class="t r" style="right:912.10px;top:454.10px;font-size:10.6px;color:#111">0.03</div><div class="t r" style="right:845.30px;top:454.10px;font-size:10.6px;color:#111">xauusd.c</div><div class="t r" style="right:777.10px;top:454.10px;font-size:10.6px;color:#111">4050.33</div><div class="t r" style="right:709.50px;top:454.10px;font-size:10.6px;color:#111">4055.08</div><div class="t r" style="right:642.70px;top:454.10px;font-size:10.6px;color:#111">0.00</div><div class="t r" style="right:493.90px;top:454.10px;font-size:10.6px;color:#111">2025.11.10 07:26:09</div><div class="t r" style="right:426.70px;top:454.10px;font-size:10.6px;color:#111">4055.03</div><div class="t r" style="right:359.30px;top:454.10px;font-size:10.6px;color:#111">0.00</div><div class="t r" style="right:291.90px;top:454.10px;font-size:10.6px;color:#111">0.00</div><div class="t r" style="right:218.10px;top:454.10px;font-size:10.6px;color:#111">14.10</div><div class="t r" style="right:7.70px;top:454.10px;font-size:10.6px;color:#111"><span style="font-size:0.94em">海龟策略黄金</span>A-NS[sl]</div><svg class="a" style="left:16px;top:469.57px" width="13" height="14" viewBox="0 0 13 14"><path d="M1.3 0.8 L7.8 0.8 L10.2 3.2 L10.2 11.4 Q10.2 12 9.6 12 L1.9 12 Q1.3 12 1.3 11.4 Z" fill="#f8f8f8" stroke="#8c8c8c" stroke-width="1"/><path d="M7.6 0.8 L7.6 3.4 L10.2 3.4" fill="none" stroke="#666" stroke-width="0.9"/><circle cx="9.2" cy="9.7" r="3.1" fill="#e8502a"/><circle cx="8.5" cy="8.9" r="1.1" fill="#fff" opacity="0.35"/></svg><div class="t" style="left:32px;top:470.77px;font-size:10.6px;color:#111">16575527</div><div class="t r" style="right:1033.70px;top:470.77px;font-size:10.6px;color:#111">2025.11.10 09:50:01</div><div class="t r" style="right:966.30px;top:470.77px;font-size:10.6px;color:#111">sell</div><div class="t r" style="right:912.10px;top:470.77px;font-size:10.6px;color:#111">0.05</div><div class="t r" style="right:845.30px;top:470.77px;font-size:10.6px;color:#111">gbpcad.c</div><div class="t r" style="right:777.10px;top:470.77px;font-size:10.6px;color:#111">1.84464</div><div class="t r" style="right:709.50px;top:470.77px;font-size:10.6px;color:#111">1.84414</div><div class="t r" style="right:642.70px;top:470.77px;font-size:10.6px;color:#111">1.84364</div><div class="t r" style="right:493.90px;top:470.77px;font-size:10.6px;color:#111">2025.11.10 10:03:42</div><div class="t r" style="right:426.70px;top:470.77px;font-size:10.6px;color:#111">1.84362</div><div class="t r" style="right:359.30px;top:470.77px;font-size:10.6px;color:#111">0.00</div><div class="t r" style="right:291.90px;top:470.77px;font-size:10.6px;color:#111">0.00</div><div class="t r" style="right:218.10px;top:470.77px;font-size:10.6px;color:#111">3.64</div><div class="t r" style="right:7.70px;top:470.77px;font-size:10.6px;color:#111"><span style="font-size:0.94em">海龟策略货币</span>A[tp]</div><svg class="a" style="left:16px;top:486.24px" width="13" height="14" viewBox="0 0 13 14"><path d="M1.3 0.8 L7.8 0.8 L10.2 3.2 L10.2 11.4 Q10.2 12 9.6 12 L1.9 12 Q1.3 12 1.3 11.4 Z" fill="#f8f8f8" stroke="#8c8c8c" stroke-width="1"/><path d="M7.6 0.8 L7.6 3.4 L10.2 3.4" fill="none" stroke="#666" stroke-width="0.9"/><circle cx="9.2" cy="9.7" r="3.1" fill="#e8502a"/><circle cx="8.5" cy="8.9" r="1.1" fill="#fff" opacity="0.35"/></svg><div class="t" style="left:32px;top:487.44px;font-size:10.6px;color:#111">16575771</div><div class="t r" style="right:1033.70px;top:487.44px;font-size:10.6px;color:#111">2025.11.10 10:05:01</div><div class="t r" style="right:966.30px;top:487.44px;font-size:10.6px;color:#111">sell</div><div class="t r" style="right:912.10px;top:487.44px;font-size:10.6px;color:#111">0.05</div><div class="t r" style="right:845.30px;top:487.44px;font-size:10.6px;color:#111">gbpcad.c</div><div class="t r" style="right:777.10px;top:487.44px;font-size:10.6px;color:#111">1.84360</div><div class="t r" style="right:709.50px;top:487.44px;font-size:10.6px;color:#111">1.84473</div><div class="t r" style="right:642.70px;top:487.44px;font-size:10.6px;color:#111">1.84423</div><div class="t r" style="right:493.90px;top:487.44px;font-size:10.6px;color:#111">2025.11.10 16:50:04</div><div class="t r" style="right:426.70px;top:487.44px;font-size:10.6px;color:#111">1.84482</div><div class="t r" style="right:359.30px;top:487.44px;font-size:10.6px;color:#111">0.00</div><div class="t r" style="right:291.90px;top:487.44px;font-size:10.6px;color:#111">0.00</div><div class="t r" style="right:218.10px;top:487.44px;font-size:10.6px;color:#111">-4.35</div><div class="t r" style="right:7.70px;top:487.44px;font-size:10.6px;color:#111"><span style="font-size:0.94em">海龟策略货币</span>A[sl]</div><svg class="a" style="left:16px;top:502.91px" width="13" height="14" viewBox="0 0 13 14"><path d="M1.3 0.8 L7.8 0.8 L10.2 3.2 L10.2 11.4 Q10.2 12 9.6 12 L1.9 12 Q1.3 12 1.3 11.4 Z" fill="#f8f8f8" stroke="#8c8c8c" stroke-width="1"/><path d="M7.6 0.8 L7.6 3.4 L10.2 3.4" fill="none" stroke="#666" stroke-width="0.9"/><circle cx="9.2" cy="9.7" r="3.1" fill="#e8502a"/><circle cx="8.5" cy="8.9" r="1.1" fill="#fff" opacity="0.35"/></svg><div class="t" style="left:32px;top:504.11px;font-size:10.6px;color:#111">16576330</div><div class="t r" style="right:1033.70px;top:504.11px;font-size:10.6px;color:#111">2025.11.10 10:20:00</div><div class="t r" style="right:966.30px;top:504.11px;font-size:10.6px;color:#111">sell</div><div class="t r" style="right:912.10px;top:504.11px;font-size:10.6px;color:#111">0.05</div><div class="t r" style="right:845.30px;top:504.11px;font-size:10.6px;color:#111">gbpcad.c</div><div class="t r" style="right:777.10px;top:504.11px;font-size:10.6px;color:#111">1.84488</div><div class="t r" style="right:709.50px;top:504.11px;font-size:10.6px;color:#111">1.84473</div><div class="t r" style="right:642.70px;top:504.11px;font-size:10.6px;color:#111">1.84423</div><div class="t r" style="right:493.90px;top:504.11px;font-size:10.6px;color:#111">2025.11.10 16:50:04</div><div class="t r" style="right:426.70px;top:504.11px;font-size:10.6px;color:#111">1.84482</div><div class="t r" style="right:359.30px;top:504.11px;font-size:10.6px;color:#111">0.00</div><div class="t r" style="right:291.90px;top:504.11px;font-size:10.6px;color:#111">0.00</div><div class="t r" style="right:218.10px;top:504.11px;font-size:10.6px;color:#111">0.21</div><div class="t r" style="right:7.70px;top:504.11px;font-size:10.6px;color:#111"><span style="font-size:0.94em">海龟策略货币</span>A-NS[sl]</div><svg class="a" style="left:16px;top:519.57px" width="13" height="14" viewBox="0 0 13 14"><path d="M1.3 0.8 L7.8 0.8 L10.2 3.2 L10.2 11.4 Q10.2 12 9.6 12 L1.9 12 Q1.3 12 1.3 11.4 Z" fill="#f8f8f8" stroke="#8c8c8c" stroke-width="1"/><path d="M7.6 0.8 L7.6 3.4 L10.2 3.4" fill="none" stroke="#666" stroke-width="0.9"/><circle cx="9.2" cy="9.7" r="3.1" fill="#e8502a"/><circle cx="8.5" cy="8.9" r="1.1" fill="#fff" opacity="0.35"/></svg><div class="t" style="left:32px;top:520.77px;font-size:10.6px;color:#111">16580480</div><div class="t r" style="right:1033.70px;top:520.77px;font-size:10.6px;color:#111">2025.11.10 14:10:00</div><div class="t r" style="right:966.30px;top:520.77px;font-size:10.6px;color:#111">sell</div><div class="t r" style="right:912.10px;top:520.77px;font-size:10.6px;color:#111">0.06</div><div class="t r" style="right:845.30px;top:520.77px;font-size:10.6px;color:#111">gbpcad.c</div><div class="t r" style="right:777.10px;top:520.77px;font-size:10.6px;color:#111">1.84688</div><div class="t r" style="right:709.50px;top:520.77px;font-size:10.6px;color:#111">1.84473</div><div class="t r" style="right:642.70px;top:520.77px;font-size:10.6px;color:#111">1.84423</div><div class="t r" style="right:493.90px;top:520.77px;font-size:10.6px;color:#111">2025.11.10 16:50:04</div><div class="t r" style="right:426.70px;top:520.77px;font-size:10.6px;color:#111">1.84482</div><div class="t r" style="right:359.30px;top:520.77px;font-size:10.6px;color:#111">0.00</div><div class="t r" style="right:291.90px;top:520.77px;font-size:10.6px;color:#111">0.00</div><div class="t r" style="right:218.10px;top:520.77px;font-size:10.6px;color:#111">8.81</div><div class="t r" style="right:7.70px;top:520.77px;font-size:10.6px;color:#111"><span style="font-size:0.94em">海龟策略货币</span>A-NS[sl]</div><svg class="a" style="left:16px;top:536.24px" width="13" height="14" viewBox="0 0 13 14"><path d="M1.3 0.8 L7.8 0.8 L10.2 3.2 L10.2 11.4 Q10.2 12 9.6 12 L1.9 12 Q1.3 12 1.3 11.4 Z" fill="#f8f8f8" stroke="#8c8c8c" stroke-width="1"/><path d="M7.6 0.8 L7.6 3.4 L10.2 3.4" fill="none" stroke="#666" stroke-width="0.9"/><circle cx="9.2" cy="9.7" r="3.1" fill="#2a8ae8"/><circle cx="8.5" cy="8.9" r="1.1" fill="#fff" opacity="0.35"/></svg><div class="t" style="left:32px;top:537.44px;font-size:10.6px;color:#111">16581700</div><div class="t r" style="right:1033.70px;top:537.44px;font-size:10.6px;color:#111">2025.11.10 14:52:01</div><div class="t r" style="right:966.30px;top:537.44px;font-size:10.6px;color:#111">buy</div><div class="t r" style="right:912.10px;top:537.44px;font-size:10.6px;color:#111">0.02</div><div class="t r" style="right:845.30px;top:537.44px;font-size:10.6px;color:#111">xauusd.c</div><div class="t r" style="right:777.10px;top:537.44px;font-size:10.6px;color:#111">4097.53</div><div class="t r" style="right:709.50px;top:537.44px;font-size:10.6px;color:#111">0.00</div><div class="t r" style="right:642.70px;top:537.44px;font-size:10.6px;color:#111">0.00</div><div class="t r" style="right:493.90px;top:537.44px;font-size:10.6px;color:#111">2025.11.10 14:59:11</div><div class="t r" style="right:426.70px;top:537.44px;font-size:10.6px;color:#111">4097.63</div><div class="t r" style="right:359.30px;top:537.44px;font-size:10.6px;color:#111">0.00</div><div class="t r" style="right:291.90px;top:537.44px;font-size:10.6px;color:#111">0.00</div><div class="t r" style="right:218.10px;top:537.44px;font-size:10.6px;color:#111">0.20</div><div class="t r" style="right:7.70px;top:537.44px;font-size:10.6px;color:#111"><span style="font-size:0.94em">海龟策略黄金</span>B<span style="font-size:0.94em">美盘</span></div><svg class="a" style="left:16px;top:552.91px" width="13" height="14" viewBox="0 0 13 14"><path d="M1.3 0.8 L7.8 0.8 L10.2 3.2 L10.2 11.4 Q10.2 12 9.6 12 L1.9 12 Q1.3 12 1.3 11.4 Z" fill="#f8f8f8" stroke="#8c8c8c" stroke-width="1"/><path d="M7.6 0.8 L7.6 3.4 L10.2 3.4" fill="none" stroke="#666" stroke-width="0.9"/><circle cx="9.2" cy="9.7" r="3.1" fill="#2a8ae8"/><circle cx="8.5" cy="8.9" r="1.1" fill="#fff" opacity="0.35"/></svg><div class="t" style="left:32px;top:554.11px;font-size:10.6px;color:#111">16583096</div><div class="t r" style="right:1033.70px;top:554.11px;font-size:10.6px;color:#111">2025.11.10 15:22:01</div><div class="t r" style="right:966.30px;top:554.11px;font-size:10.6px;color:#111">buy</div><div class="t r" style="right:912.10px;top:554.11px;font-size:10.6px;color:#111">0.02</div><div class="t r" style="right:845.30px;top:554.11px;font-size:10.6px;color:#111">xauusd.c</div><div class="t r" style="right:777.10px;top:554.11px;font-size:10.6px;color:#111">4103.88</div><div class="t r" style="right:709.50px;top:554.11px;font-size:10.6px;color:#111">0.00</div><div class="t r" style="right:642.70px;top:554.11px;font-size:10.6px;color:#111">4102.00</div><div class="t r" style="right:493.90px;top:554.11px;font-size:10.6px;color:#111">2025.11.10 18:17:29</div><div class="t r" style="right:426.70px;top:554.11px;font-size:10.6px;color:#111">4090.66</div><div class="t r" style="right:359.30px;top:554.11px;font-size:10.6px;color:#111">0.00</div><div class="t r" style="right:291.90px;top:554.11px;font-size:10.6px;color:#111">0.00</div><div class="t r" style="right:218.10px;top:554.11px;font-size:10.6px;color:#111">-26.44</div><div class="t r" style="right:7.70px;top:554.11px;font-size:10.6px;color:#111"><span style="font-size:0.94em">海龟策略黄金</span>B<span style="font-size:0.94em">美盘</span></div><svg class="a" style="left:16px;top:569.57px" width="13" height="14" viewBox="0 0 13 14"><path d="M1.3 0.8 L7.8 0.8 L10.2 3.2 L10.2 11.4 Q10.2 12 9.6 12 L1.9 12 Q1.3 12 1.3 11.4 Z" fill="#f8f8f8" stroke="#8c8c8c" stroke-width="1"/><path d="M7.6 0.8 L7.6 3.4 L10.2 3.4" fill="none" stroke="#666" stroke-width="0.9"/><circle cx="9.2" cy="9.7" r="3.1" fill="#2a8ae8"/><circle cx="8.5" cy="8.9" r="1.1" fill="#fff" opacity="0.35"/></svg><div class="t" style="left:32px;top:570.77px;font-size:10.6px;color:#111">16589258</div><div class="t r" style="right:1033.70px;top:570.77px;font-size:10.6px;color:#111">2025.11.10 17:10:00</div><div class="t r" style="right:966.30px;top:570.77px;font-size:10.6px;color:#111">buy</div><div class="t r" style="right:912.10px;top:570.77px;font-size:10.6px;color:#111">0.03</div><div class="t r" style="right:845.30px;top:570.77px;font-size:10.6px;color:#111">xauusd.c</div><div class="t r" style="right:777.10px;top:570.77px;font-size:10.6px;color:#111">4090.78</div><div class="t r" style="right:709.50px;top:570.77px;font-size:10.6px;color:#111">4092.28</div><div class="t r" style="right:642.70px;top:570.77px;font-size:10.6px;color:#111">0.00</div><div class="t r" style="right:493.90px;top:570.77px;font-size:10.6px;color:#111">2025.11.10 17:25:27</div><div class="t r" style="right:426.70px;top:570.77px;font-size:10.6px;color:#111">4092.11</div><div class="t r" style="right:359.30px;top:570.77px;font-size:10.6px;color:#111">0.00</div><div class="t r" style="right:291.90px;top:570.77px;font-size:10.6px;color:#111">0.00</div><div class="t r" style="right:218.10px;top:570.77px;font-size:10.6px;color:#111">3.99</div><div class="t r" style="right:7.70px;top:570.77px;font-size:10.6px;color:#111"><span style="font-size:0.94em">海龟策略黄金</span>B[sl]</div><svg class="a" style="left:16px;top:586.24px" width="13" height="14" viewBox="0 0 13 14"><path d="M1.3 0.8 L7.8 0.8 L10.2 3.2 L10.2 11.4 Q10.2 12 9.6 12 L1.9 12 Q1.3 12 1.3 11.4 Z" fill="#f8f8f8" stroke="#8c8c8c" stroke-width="1"/><path d="M7.6 0.8 L7.6 3.4 L10.2 3.4" fill="none" stroke="#666" stroke-width="0.9"/><circle cx="9.2" cy="9.7" r="3.1" fill="#2a8ae8"/><circle cx="8.5" cy="8.9" r="1.1" fill="#fff" opacity="0.35"/></svg><div class="t" style="left:32px;top:587.44px;font-size:10.6px;color:#111">16591185</div><div class="t r" style="right:1033.70px;top:587.44px;font-size:10.6px;color:#111">2025.11.10 17:54:01</div><div class="t r" style="right:966.30px;top:587.44px;font-size:10.6px;color:#111">buy</div><div class="t r" style="right:912.10px;top:587.44px;font-size:10.6px;color:#111">0.03</div><div class="t r" style="right:845.30px;top:587.44px;font-size:10.6px;color:#111">xauusd.c</div><div class="t r" style="right:777.10px;top:587.44px;font-size:10.6px;color:#111">4085.12</div><div class="t r" style="right:709.50px;top:587.44px;font-size:10.6px;color:#111">4086.62</div><div class="t r" style="right:642.70px;top:587.44px;font-size:10.6px;color:#111">4093.00</div><div class="t r" style="right:493.90px;top:587.44px;font-size:10.6px;color:#111">2025.11.10 18:17:30</div><div class="t r" style="right:426.70px;top:587.44px;font-size:10.6px;color:#111">4090.61</div><div class="t r" style="right:359.30px;top:587.44px;font-size:10.6px;color:#111">0.00</div><div class="t r" style="right:291.90px;top:587.44px;font-size:10.6px;color:#111">0.00</div><div class="t r" style="right:218.10px;top:587.44px;font-size:10.6px;color:#111">16.47</div><div class="t r" style="right:7.70px;top:587.44px;font-size:10.6px;color:#111"><span style="font-size:0.94em">海龟策略黄金</span>B</div><div class="a" style="left:13.5px;top:601.11px;width:1262.3px;height:16.2px;background:#c8c8c8"></div><svg class="a" style="left:19px;top:605.61px" width="8" height="8" viewBox="0 0 8 8"><circle cx="4" cy="4" r="3" fill="none" stroke="#999" stroke-width="0.9"/><circle cx="4" cy="4" r="1.2" fill="#aaa"/></svg><div class="t" style="left:32px;top:604.41px;font-size:10.6px;font-weight:bold;color:#111"><span style="font-size:0.92em">盈</span>/<span style="font-size:0.92em">亏</span>: 112.21&nbsp; <span style="font-size:0.92em">信用额</span>: 0.00&nbsp; <span style="font-size:0.92em">存款</span>: 0.00&nbsp; <span style="font-size:0.92em">取款</span>: 0.00</div><div class="t r" style="right:218.10px;top:604.41px;font-size:10.6px;font-weight:bold;color:#111">112.21</div><div class="a" style="left:13.5px;top:617.31px;width:1262.3px;height:22.19px;background:#fff"></div><div class="a" style="left:13.5px;top:639px;width:1262.5px;height:1px;background:#3a3a3a"></div><div class="a" style="left:89px;top:639px;width:56px;height:17px;background:#fff;border:1px solid #3a3a3a;border-top:none"></div><div class="t" style="left:24px;top:641.5px;font-size:10.6px;color:#999"><span style="font-size:0.94em">交易</span></div><div class="t" style="left:61px;top:641.5px;font-size:10.6px;color:#999"><span style="font-size:0.94em">展示</span></div><div class="t" style="left:97px;top:641.5px;font-size:10.6px;color:#111"><span style="font-size:0.94em">账户历史</span></div><div class="t" style="left:154.3px;top:641.5px;font-size:10.6px;color:#999"><span style="font-size:0.94em">新闻</span></div><div class="t" style="left:191px;top:641.5px;font-size:10.6px;color:#999"><span style="font-size:0.94em">警报</span></div><div class="t" style="left:227px;top:641.5px;font-size:10.6px;color:#999"><span style="font-size:0.94em">邮箱</span></div><div class="t" style="left:275px;top:641.5px;font-size:10.6px;color:#999"><span style="font-size:0.94em">市场</span></div><div class="t" style="left:323px;top:641.5px;font-size:10.6px;color:#999"><span style="font-size:0.94em">信号</span></div><div class="t" style="left:359px;top:641.5px;font-size:10.6px;color:#999"><span style="font-size:0.94em">文章</span></div><div class="t" style="left:396px;top:641.5px;font-size:10.6px;color:#999"><span style="font-size:0.94em">代码库</span></div><div class="t" style="left:444px;top:641.5px;font-size:10.6px;color:#999">EA</div><div class="t" style="left:473px;top:641.5px;font-size:10.6px;color:#999"><span style="font-size:0.94em">日志</span></div><div class="t" style="left:250px;top:644px;font-size:8.5px;font-weight:bold;color:#e02020">14</div><div class="t" style="left:298px;top:644px;font-size:8.5px;font-weight:bold;color:#e02020">83</div><div class="a" style="left:52.5px;top:642px;width:1px;height:12px;background:#a8a8a8"></div><div class="a" style="left:183px;top:642px;width:1px;height:12px;background:#a8a8a8"></div><div class="a" style="left:219.4px;top:642px;width:1px;height:12px;background:#a8a8a8"></div><div class="a" style="left:267px;top:642px;width:1px;height:12px;background:#a8a8a8"></div><div class="a" style="left:315px;top:642px;width:1px;height:12px;background:#a8a8a8"></div><div class="a" style="left:351.5px;top:642px;width:1px;height:12px;background:#a8a8a8"></div><div class="a" style="left:388px;top:642px;width:1px;height:12px;background:#a8a8a8"></div><div class="a" style="left:435px;top:642px;width:1px;height:12px;background:#a8a8a8"></div><div class="a" style="left:465px;top:642px;width:1px;height:12px;background:#a8a8a8"></div><div class="a" style="left:501px;top:642px;width:1px;height:12px;background:#a8a8a8"></div><div class="a" style="left:0;top:659.5px;width:1280px;height:1px;background:#c4c4c4"></div><div class="a" style="left:0;top:660.5px;width:1280px;height:1px;background:#fbfbfb"></div><div class="t" style="left:2px;top:666.5px;font-size:10.5px;color:#111"><span style="font-size:0.95em">寻求帮助</span>,<span style="font-size:0.95em">请按</span>F1<span style="font-size:0.95em">键</span></div><div class="a" style="left:646.25px;top:663px;width:1px;height:16px;background:#c8c8c8"></div><div class="a" style="left:750.5px;top:663px;width:1px;height:16px;background:#c8c8c8"></div><div class="a" style="left:846.75px;top:663px;width:1px;height:16px;background:#c8c8c8"></div><div class="a" style="left:912.5px;top:663px;width:1px;height:16px;background:#c8c8c8"></div><div class="a" style="left:977.5px;top:663px;width:1px;height:16px;background:#c8c8c8"></div><div class="a" style="left:1040px;top:663px;width:1px;height:16px;background:#c8c8c8"></div><div class="a" style="left:1104.7px;top:663px;width:1px;height:16px;background:#c8c8c8"></div><div class="a" style="left:1164.7px;top:663px;width:1px;height:16px;background:#c8c8c8"></div><div class="t" style="left:651px;top:666.5px;font-size:10.5px;color:#111">Default</div><svg class="a" style="left:1168px;top:664px" width="24" height="14" viewBox="0 0 24 14"><rect x="0.50" y="1" width="1.8" height="7.50" fill="#7aa020"/><rect x="0.50" y="8.50" width="1.8" height="4.50" fill="#1a4a7a"/><rect x="3.20" y="1" width="1.8" height="6.60" fill="#7aa020"/><rect x="3.20" y="7.60" width="1.8" height="5.40" fill="#1a4a7a"/><rect x="5.90" y="1" width="1.8" height="5.70" fill="#7aa020"/><rect x="5.90" y="6.70" width="1.8" height="6.30" fill="#1a4a7a"/><rect x="8.60" y="1" width="1.8" height="4.80" fill="#7aa020"/><rect x="8.60" y="5.80" width="1.8" height="7.20" fill="#1a4a7a"/><rect x="11.30" y="1" width="1.8" height="3.90" fill="#7aa020"/><rect x="11.30" y="4.90" width="1.8" height="8.10" fill="#1a4a7a"/><rect x="14.00" y="1" width="1.8" height="3.00" fill="#7aa020"/><rect x="14.00" y="4.00" width="1.8" height="9.00" fill="#1a4a7a"/><rect x="16.70" y="1" width="1.8" height="2.10" fill="#7aa020"/><rect x="16.70" y="3.10" width="1.8" height="9.90" fill="#1a4a7a"/><rect x="19.40" y="1" width="1.8" height="1.20" fill="#7aa020"/><rect x="19.40" y="2.20" width="1.8" height="10.80" fill="#1a4a7a"/></svg><div class="t" style="left:1193px;top:666.5px;font-size:10.5px;color:#111">25/1 kb</div><div class="a" style="left:0;top:680.5px;width:1280px;height:2.5px;background:#e9e3dc"></div><svg class="a" style="left:1268px;top:670px" width="12" height="11" viewBox="0 0 12 11"><path d="M11 2 L3 10 M11 5 L6 10 M11 8 L9 10" stroke="#9a9a9a" stroke-width="0.9"/></svg><div class="a" style="left:1225px;top:645.5px;width:54px;height:24px;background:#f6f6f6;border-radius:3px;box-shadow:0 0 2px rgba(0,0,0,0.12)"></div><div class="t" style="left:1231.5px;top:650.5px;font-size:10.3px;color:#222">显示桌面</div><div class="t" style="left:1127px;top:631.5px;font-size:24px;color:#fff;text-shadow:0.8px 0.4px 0 rgba(30,30,30,0.7);transform:scaleX(0.99);transform-origin:0 0">@Kind_Plate</div><svg class="a" style="left:1095px;top:633px" width="28" height="30" viewBox="0 0 28 30"><path d="M13 2 C20 2 25 7 25 13 C25 19 20 23.5 14 23.5 C12 26 9 28 7.5 28.5 C8.5 26.5 9 24.5 8.5 22.5 C4.5 20.5 2 17 2 13 C2 7 7 2 13 2 Z" fill="#fff" style="filter:drop-shadow(0.8px 0.5px 0 rgba(40,40,40,0.6))"/><path d="M16.5 6.5 C13.5 6 12.5 8 12.3 10.5 L11.5 19.5 M9.5 12 H15.5" fill="none" stroke="#666" stroke-width="0.9"/></svg></body></html>
